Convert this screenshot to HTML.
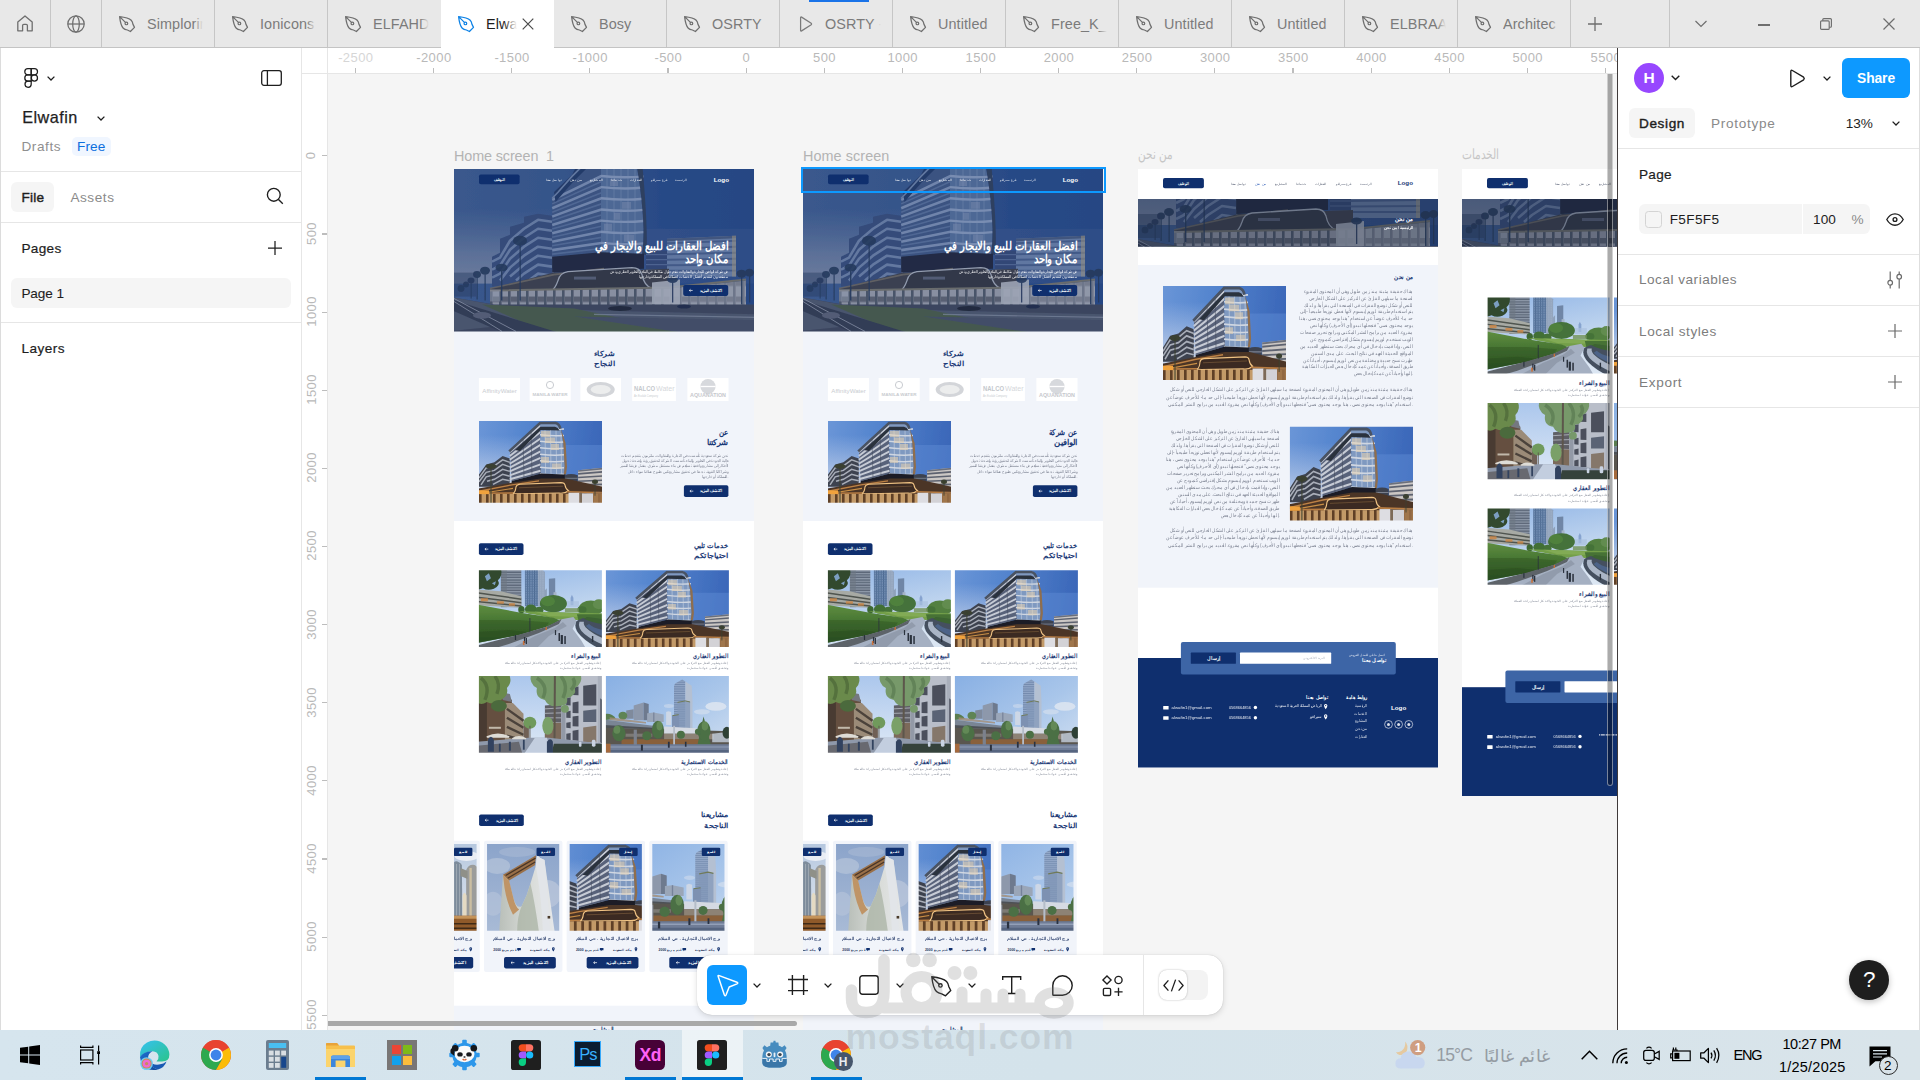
<!DOCTYPE html>
<html><head><meta charset="utf-8"><title>Elwafin - Figma</title><style>
html,body{margin:0;padding:0}
body{width:1920px;height:1080px;position:relative;overflow:hidden;background:#f5f5f5;font-family:"Liberation Sans",sans-serif}
.a{position:absolute;box-sizing:border-box}
.t{position:absolute;white-space:pre;line-height:1;font-family:"Liberation Sans",sans-serif}
svg{position:absolute;overflow:visible}
</style></head>
<body>
<svg width="0" height="0" style="position:absolute;left:-10px;top:-10px">
<defs>
<filter id="fb1" x="-5%" y="-5%" width="110%" height="110%"><feGaussianBlur stdDeviation="0.55"/></filter>
<filter id="fb2" x="-5%" y="-5%" width="110%" height="110%"><feGaussianBlur stdDeviation="0.4"/></filter>
<linearGradient id="gHeroSky" x1="0" y1="0" x2="1" y2="0"><stop offset="0" stop-color="#4a6ba3"/><stop offset="0.35" stop-color="#43659f"/><stop offset="0.7" stop-color="#30569a"/><stop offset="1" stop-color="#2d5296"/></linearGradient>
<linearGradient id="gHeroHaze" x1="0" y1="0" x2="0" y2="1"><stop offset="0" stop-color="#7d8fb4" stop-opacity="0"/><stop offset="0.6" stop-color="#8796b8" stop-opacity="0.75"/><stop offset="1" stop-color="#9aa3bd" stop-opacity="0.9"/></linearGradient>
<linearGradient id="gHeroGlass" x1="0" y1="0" x2="1" y2="0"><stop offset="0" stop-color="#6f86b3"/><stop offset="0.5" stop-color="#8197c0"/><stop offset="1" stop-color="#506a9e"/></linearGradient>
<pattern id="pBandH" width="4" height="5.2" patternUnits="userSpaceOnUse"><rect width="4" height="5.2" fill="#7d92bb"/><rect y="2.8" width="4" height="2.4" fill="#4a6192"/></pattern>
<pattern id="pBandH2" width="4" height="6.6" patternUnits="userSpaceOnUse"><rect width="4" height="6.6" fill="#7990bd"/><rect y="4.8" width="4" height="1.8" fill="#50689a"/></pattern>
<pattern id="pBandH3" width="4" height="4.4" patternUnits="userSpaceOnUse"><rect width="4" height="4.4" fill="#7085ad"/><rect y="2.2" width="4" height="2.2" fill="#3f5585"/></pattern>
<pattern id="pShop" width="9" height="16" patternUnits="userSpaceOnUse"><rect width="9" height="16" fill="#b4b6bf"/><rect x="0" width="2.6" height="16" fill="#5f6473"/><rect x="2.6" y="0" width="6.4" height="5.5" fill="#72747f"/></pattern>

<symbol id="hero" viewBox="0 0 300 163" preserveAspectRatio="none">
<g filter="url(#fb1)"><rect x="-6" y="-6" width="312" height="175" fill="url(#gHeroSky)"/>
<rect x="0" y="40" width="100" height="75" fill="url(#gHeroHaze)"/>
<rect x="190" y="60" width="110" height="55" fill="#46669f" opacity="0.5"/>
<!-- left wing -->
<path d="M38,118 V88 L46,84 V70 L56,66 V58 L70,54 V48 L84,45 L98.2,47 V118 Z" fill="#41588a"/>
<clipPath id="cpWing"><path d="M38,118 V88 L46,84 V70 L56,66 V58 L70,54 V48 L84,45 L98.2,47 V118 Z"/></clipPath><g clip-path="url(#cpWing)"><path d="M38,93 L46,89 L56,72 L70,60 L84,51 L98,53 M38,101 L46,97 L56,81 L70,69 L84,60 L98,62 M38,109 L46,105 L56,90 L70,78 L84,69 L98,71 M46,112 L56,99 L70,87 L84,78 L98,80 M56,108 L70,96 L84,87 L98,89 M62,112 L70,105 L84,96 L98,98 M76,111 L84,105 L98,107" stroke="#8196be" stroke-width="2.6" fill="none" stroke-linejoin="round"/></g>
<!-- main tower side face -->
<path d="M98.2,100 V28 L104,22 L118,6 L126,-2 H148 V96 Z" fill="#4a6293"/>
<path d="M98.2,31.0 L147.5,7.0 M98.2,39.4 L147.5,18.2 M98.2,47.8 L147.5,29.4 M98.2,56.2 L147.5,40.6 M98.2,64.6 L147.5,51.8 M98.2,73.0 L147.5,63.0 M98.2,81.4 L147.5,74.2" stroke="#92a7cc" stroke-width="2.6" fill="none"/>
<path d="M98.2,35.0 L147.5,12.6 M98.2,43.4 L147.5,23.8 M98.2,51.8 L147.5,35.0 M98.2,60.2 L147.5,46.2 M98.2,68.6 L147.5,57.4 M98.2,77.0 L147.5,68.6 M98.2,85.4 L147.5,79.8" stroke="#6f87b4" stroke-width="1.6" fill="none" opacity="0.8"/>
<path d="M100,23 L118,6 L122,-2 L134,-2 L119,13 L101.5,33 Z" fill="#2b4272"/>
<path d="M98.2,29.4 L104,23.4 L118,7.4 L126,-0.6" stroke="#8097bf" stroke-width="1.6" fill="none"/>
<!-- main tower glass -->
<path d="M147,-2 H183 Q188.5,30 189.6,60 Q189.6,76 188,86 L147,86 Z" fill="#647fae"/>
<path d="M153,0 V86 M160,0 V86 M167,0 V86 M174,0 V86 M181,0 V86" stroke="#9db1d4" stroke-width="0.9" opacity="0.55"/>
<path d="M156,10 h8 v7 h-8 Z M168,33 h9 v7 h-9 Z M150,55 h8 v7 h-8 Z M170,66 h10 v7 h-10 Z M160,44 h6 v7 h-6 Z" fill="#a9bad8" opacity="0.4"/>
<path d="M147,7.0 Q170,9.4 189.6,7.4 M147,18.2 Q170,20.6 189.6,18.6 M147,29.4 Q170,31.8 189.6,29.8 M147,40.6 Q170,43.0 189.6,41.0 M147,51.8 Q170,54.2 189.6,52.2 M147,63.0 Q170,65.4 189.6,63.4 M147,74.2 Q170,76.6 189.6,74.6 M147,85.4 Q170,87.8 189.6,85.8" stroke="#9fb3d6" stroke-width="2.4" fill="none"/>
<path d="M183,-2 Q188.5,30 189.6,60 Q189.6,76 188,86 L192.6,86 Q194,60 188.6,-2 Z" fill="#3a4868"/>
<!-- dark band under tower -->
<path d="M98.2,88 L147,83.6 L190,85 V100 L98.2,104 Z" fill="#262b3f"/>
<!-- right buildings -->
<rect x="192" y="82" width="22" height="24" fill="#3d5184"/>
<path d="M192,86 H214 M192,91 H214 M192,96 H214 M192,101 H214" stroke="#647aa8" stroke-width="1.2"/>
<path d="M213,70 L282,67 V108 H213 Z" fill="#7f95bf"/>
<path d="M213,74.5 L282,72 M213,80 L282,78 M213,85.5 L282,84 M213,91 L282,90 M213,96.5 L282,96 M213,102 L282,102" stroke="#566d9d" stroke-width="2"/>
<path d="M213,70 L282,67 V69.5 L213,72.5 Z" fill="#55698f"/>
<rect x="278" y="67" width="4" height="41" fill="#c4b48f" opacity="0.55"/>
<!-- podium -->
<path d="M36,120 L100,104 L215,100 V124 H36 Z" fill="#4b4b52"/>
<path d="M36,120 L100,106 L150,100" stroke="#8b7f70" stroke-width="1.6" fill="none" opacity="0.8"/>
<path d="M96,123 Q101,121 104,112 Q106,104 114,103 L178,99 Q186,99 188,106 Q190,117 198,120" stroke="#c3c7d2" stroke-width="1.3" fill="#3c3d46"/>
<rect x="120" y="108" width="22" height="3" fill="#8893ad" opacity="0.6"/>
<!-- shops -->
<path d="M36,122 L215,120 L292,112 V140 H36 Z" fill="url(#pShop)"/>
<path d="M215,120 L292,112 V140 H215 Z" fill="#c9ccd4" opacity="0.45"/>
<path d="M36,122 L215,119 L292,111" stroke="#8a8578" stroke-width="2" fill="none"/>
<rect x="36" y="121" width="10" height="12" fill="#b9bfd0" opacity="0.5"/>
<path d="M198,114 L226,111 V136 H198 Z" fill="#d0d3da" opacity="0.9"/>
<!-- ground -->
<path d="M-6,128 L40,136 L306,136 V169 H-6 Z" fill="#4b5064"/>
<path d="M-6,128 L60,140 L306,146 V152 L120,150 L-6,163 Z" fill="#646c82" opacity="0.7"/>
<path d="M28,136 L120,140 L260,169 H104 Z" fill="#586c4f"/>
<path d="M-6,130 L120,169 H60 L-6,140 Z" fill="#3e4458"/>
<path d="M0,133 L48,163 M0,130 L62,163" stroke="#aeb3c2" stroke-width="1" opacity="0.8"/>
<path d="M120,148 L306,152 V169 H260 Z" fill="#555c70"/>
<path d="M140,146 L306,149" stroke="#a3a9b9" stroke-width="1.2" opacity="0.7"/>

<!-- cars -->
<ellipse cx="166" cy="140" rx="12" ry="2.6" fill="#2a2d3a"/>
<ellipse cx="230" cy="138" rx="7" ry="2" fill="#27324f"/>
<ellipse cx="28" cy="147" rx="9" ry="3.4" fill="#6a7084"/>
<!-- palms -->
<g fill="#2c4163" opacity="0.9"><rect x="65.5" y="74" width="1.3" height="58"/><ellipse cx="66" cy="72" rx="7" ry="5"/><rect x="47" y="100" width="1.4" height="32"/><ellipse cx="47.5" cy="99" rx="6" ry="4"/>
<rect x="30.5" y="104" width="1.2" height="28"/><ellipse cx="31" cy="102" rx="5" ry="4"/><rect x="22.5" y="107" width="1.2" height="24"/><ellipse cx="23" cy="106" rx="4" ry="3.5"/>
<ellipse cx="17" cy="112" rx="3.5" ry="3"/><ellipse cx="12" cy="116" rx="3" ry="3"/><ellipse cx="7" cy="120" rx="3.5" ry="3.5"/><rect x="16.6" y="112" width="1" height="18"/>
<rect x="287" y="106" width="1.3" height="30"/><ellipse cx="287.5" cy="105" rx="5" ry="4"/><rect x="295" y="104" width="1.3" height="30"/><ellipse cx="295.5" cy="104" rx="4.5" ry="4"/>
<rect x="218" y="112" width="1.3" height="22"/><ellipse cx="218.5" cy="111" rx="5.5" ry="3.5"/></g>
<rect x="-4" y="104" width="26" height="24" fill="#33466b" opacity="0.5"/>
<rect x="-6" y="-6" width="312" height="175" fill="#142a52" opacity="0.27"/>
</g></symbol>

<!-- curved building day image 123x82 -->
<linearGradient id="gBSky" x1="0" y1="0" x2="1" y2="0.1"><stop offset="0" stop-color="#6c97d8"/><stop offset="0.45" stop-color="#5283cd"/><stop offset="1" stop-color="#3a66b8"/></linearGradient>
<linearGradient id="gBHaze" x1="0" y1="0" x2="0" y2="1"><stop offset="0" stop-color="#c9d6ec" stop-opacity="0"/><stop offset="1" stop-color="#d4dced" stop-opacity="0.95"/></linearGradient>
<pattern id="pB1" width="4" height="4.6" patternUnits="userSpaceOnUse"><rect width="4" height="4.6" fill="#c2c7d0"/><rect y="2" width="4" height="2.6" fill="#4c5263"/></pattern>
<pattern id="pB2" width="4" height="5.4" patternUnits="userSpaceOnUse"><rect width="4" height="5.4" fill="#8fb0dc"/><rect y="3.9" width="4" height="1.5" fill="#dfe5ee"/></pattern>
<pattern id="pB3" width="4" height="3.8" patternUnits="userSpaceOnUse"><rect width="4" height="3.8" fill="#b7bcc6"/><rect y="1.8" width="4" height="2" fill="#3f4556"/></pattern>
<pattern id="pB4" width="7" height="10" patternUnits="userSpaceOnUse"><rect width="7" height="10" fill="#c39a68"/><rect width="2.6" height="10" fill="#5f3f27"/></pattern>
<symbol id="bldg" viewBox="0 0 123 82" preserveAspectRatio="none">
<g filter="url(#fb2)"><rect x="-4" y="-4" width="131" height="90" fill="url(#gBSky)"/>
<rect x="-4" y="14" width="60" height="56" fill="url(#gBHaze)"/>
<rect x="84" y="24" width="43" height="30" fill="#5d8ad3" opacity="0.5"/>
<!-- left wing -->
<path d="M0,66 V53.6 L7.2,43.5 L15.4,41.4 L23.6,35.1 L30.8,37.7 V66 Z" fill="#3e434f"/>
<path d="M0,57 L7.2,47 L15.4,45 L23.6,39 L30.8,41.5 M0,61 L7.2,51.5 L15.4,49.5 L23.6,43.5 L30.8,46 M2,64 L7.2,56 L15.4,54 L23.6,48.5 L30.8,50.5 M8,60.5 L15.4,58.5 L23.6,53.5 L30.8,55.5 M14,63.5 L23.6,58.5 L30.8,60" stroke="#a9aeb9" stroke-width="1.5" fill="none"/>
<!-- tower side face -->
<path d="M30.8,28.9 L61.1,0.8 L62,52.7 L32.7,60.3 Z" fill="#59627a"/>
<path d="M30.8,31.1 L61.5,4.4 M30.8,35.0 L61.5,10.9 M30.8,38.9 L61.5,17.4 M30.8,42.8 L61.5,23.9 M30.8,46.7 L61.5,30.4 M30.8,50.6 L61.5,36.9 M30.8,54.5 L61.5,43.4 M30.8,58.4 L61.5,49.9 M30.8,62.3 L61.5,56.4" stroke="#c6cbd5" stroke-width="1.9" fill="none"/>
<path d="M44,17 L45,57 M52,9.5 L53,55" stroke="#3f4759" stroke-width="0.8" opacity="0.6"/>
<!-- tower glass -->
<path d="M61.1,0.8 L76.5,0.8 Q81,2 81.8,7.5 L84.2,20.9 L85.7,46 L84.7,53.6 L62,52.7 Z" fill="#7f99c0"/>
<path d="M66,8 L66.6,52.9 M71.5,8 L72,53 M77,8.5 L77.6,53.2 M82,12 L82.6,53.4" stroke="#d6deea" stroke-width="0.7" opacity="0.7"/>
<path d="M61,7.3 Q74,8.9 85,7.9 M61,13.8 Q74,15.4 85,14.4 M61,20.3 Q74,21.9 85,20.9 M61,26.8 Q74,28.4 85,27.4 M61,33.3 Q74,34.9 85,33.9 M61,39.8 Q74,41.4 85,40.4 M61,46.3 Q74,47.9 85,46.9 M61,52.8 Q74,54.4 85,53.4" stroke="#cfd6e1" stroke-width="1.5" fill="none"/>
<path d="M62,10 H71 V16 H62 Z M72,23 H80 V29 H72 Z M62,36 H70 V42 H62 Z M73,42.5 H82 V48 H73 Z M66,16.5 H76 V22 H66 Z" fill="#ead3b0" opacity="0.55"/>
<path d="M81.8,7.5 L84.2,20.9 L85.7,46 L84.7,53.6 L87,53.6 L88,46 L86.6,22 Z" fill="#8f6e4d"/>
<!-- roof slab -->
<path d="M30.2,30.4 L61.1,1.9 L76.5,1.9 Q80.4,2.8 81.4,7.7" stroke="#4a5263" stroke-width="2.6" fill="none"/>
<path d="M36,29 L61.5,5.6 L76,5.6 Q79,6.4 80.6,9.5 L61.8,9 L41,30 Z" fill="#2b303d"/>
<!-- dark underside -->
<path d="M32.7,60.3 L62,52.7 L84.7,53.6 L86.5,53.6 V58.5 L62,58.5 L32.7,66.5 Z" fill="#1b1e27"/>
<!-- right buildings -->
<path d="M85.7,54.4 Q92,52 98.7,54.4 V68 H85.7 Z" fill="#3d4350"/>
<path d="M86,57.5 H98.7 M86,61 H98.7 M86,64.5 H98.7" stroke="#7a808e" stroke-width="0.9"/>
<path d="M99.1,49.4 L123.5,46.9 V68 H99.1 Z" fill="#cbc7c4"/>
<path d="M99.1,53 L123.5,51 M99.1,56.7 L123.5,55.2 M99.1,60.4 L123.5,59.4 M99.1,64.1 L123.5,63.6" stroke="#5d626f" stroke-width="1.6"/>
<path d="M99.1,49.4 L123.5,46.9 V48.6 L99.1,51 Z" fill="#6b6f7c"/>
<!-- podium -->
<path d="M-2,68 L32.7,62 L62,57.6 L86.5,57.6 L123.5,66 V84 H-2 Z" fill="#4c3526"/>
<path d="M0,70.5 L33,64 L60,60" stroke="#c98a48" stroke-width="1.3" fill="none" opacity="0.9"/>
<path d="M0,73 L34,67.6" stroke="#e8a64e" stroke-width="1.1" fill="none" opacity="0.8"/>
<path d="M33.7,72.6 Q36.4,72 37,66.1 Q37.6,63.6 41,63.4 L82,61.8 Q85.6,61.8 86,64.4 Q86.6,68.4 89.6,70 Q86,73 80,72.4 L38,73 Z" fill="#3b2a20" stroke="#f0c384" stroke-width="1.1"/>
<path d="M40,67 L84,65.4" stroke="#7a5a3c" stroke-width="0.8" opacity="0.8"/>
<path d="M-2,73 H125 V84 H-2 Z" fill="url(#pB4)"/>
<path d="M-2,72.6 L34,72.2 M88,71 L125,72" stroke="#b87d43" stroke-width="1.5"/>
<rect x="0" y="69.6" width="10" height="3.8" fill="#f0a23c"/>
<rect x="89.5" y="72" width="11" height="10.5" fill="#dddde2"/><rect x="103" y="72.6" width="11" height="10" fill="#d3d2d6"/><rect x="100.5" y="72" width="2.5" height="11" fill="#7c6a58"/>
<rect x="114" y="71" width="10" height="12" fill="#9a7048" opacity="0.85"/>
<g fill="#3a4030"><path d="M6,46 Q12,40 18,46 Q14,44.6 12,48 Q10,44.6 6,46 Z"/><ellipse cx="12" cy="45.4" rx="5.4" ry="2.6"/><rect x="11.5" y="45" width="1" height="38"/><ellipse cx="116" cy="61" rx="3" ry="2.2"/><rect x="115.6" y="61" width="0.8" height="14"/></g>
</g></symbol>

<!-- park 123x77 -->
<linearGradient id="gPSky" x1="0" y1="0" x2="0.3" y2="1"><stop offset="0" stop-color="#8fb4e6"/><stop offset="0.6" stop-color="#bdd3ee"/><stop offset="1" stop-color="#dbe6f3"/></linearGradient>
<linearGradient id="gPHill" x1="0" y1="0" x2="0" y2="1"><stop offset="0" stop-color="#5f8e40"/><stop offset="0.5" stop-color="#447231"/><stop offset="1" stop-color="#2d5224"/></linearGradient>
<pattern id="pP1" width="3" height="2.6" patternUnits="userSpaceOnUse"><rect width="3" height="2.6" fill="#8e99a9"/><rect y="1.3" width="3" height="1.3" fill="#5b6677"/></pattern>
<pattern id="pP2" width="2.4" height="2.4" patternUnits="userSpaceOnUse"><rect width="2.4" height="2.4" fill="#7590b5"/><rect width="1" height="2.4" fill="#4e6a91"/><rect y="1.4" width="2.4" height="1" fill="#55739b" opacity="0.7"/></pattern>
<symbol id="park" viewBox="0 0 123 77" preserveAspectRatio="none">
<g filter="url(#fb2)"><rect x="-4" y="-4" width="131" height="85" fill="url(#gPSky)"/>
<!-- buildings -->
<path d="M22,-2 H42.4 V37 H22 Z" fill="url(#pP1)"/>
<path d="M22,-2 H28 V37 H22 Z" fill="#6d7782" opacity="0.6"/>
<path d="M46,-2 H62 L66,2 V36 H46 Z" fill="url(#pP2)"/>
<path d="M59,-2 H62 L66,2 V36 H59 Z" fill="#a9b7c9" opacity="0.75"/>
<path d="M66,20 L68,18 V36 H66 Z" fill="#8ea1ba"/>
<path d="M70,8.6 L76.3,7.9 V26 H70 Z" fill="#6f86a6"/><path d="M74.6,22 H77.6 V27 H74.6 Z" fill="#a5b4c8"/>
<path d="M91.7,35 V27.5 L93,24.6 L94.5,27.5 V35 Z" fill="#86a3cf"/><rect x="88" y="31" width="12" height="6" fill="#a9c0de" opacity="0.7"/>
<!-- dark tree top-left -->
<path d="M-2,-2 H22 Q24,6 19,10 Q22,15 15,18.5 Q9,21 4,18 L-2,20 Z" fill="#32492f"/>
<path d="M6,6 L10,3 L12,8 L8,11 Z M13,13 L17,11 L16,15 Z" fill="#8fb4e6" opacity="0.8"/>
<!-- terraces -->
<path d="M-2,19.3 L22,21 L42.4,26 V37.5 L-2,35 Z" fill="#a7aaa4"/>
<path d="M-2,22.5 L42.4,29 M-2,27 L42.4,32.6 M-2,31.4 L42.4,35.8" stroke="#50544f" stroke-width="1.5"/>
<path d="M2,28 H9 V31 H2 Z M18,31 H25 V33.6 H18 Z M30,33 H36 V35.6 H30 Z" fill="#c98646" opacity="0.85"/>
<!-- trees band -->
<ellipse cx="74.5" cy="33.5" rx="13.5" ry="8.6" fill="#44723a"/><ellipse cx="69" cy="31" rx="7" ry="5" fill="#52833f" opacity="0.9"/>
<ellipse cx="52" cy="39" rx="6" ry="4.6" fill="#426f36"/><ellipse cx="42.5" cy="39.5" rx="3.2" ry="3.6" fill="#3d6832"/><ellipse cx="60.5" cy="40" rx="4" ry="3.4" fill="#447238"/>
<ellipse cx="112" cy="38" rx="12" ry="7.6" fill="#52803f"/><ellipse cx="120" cy="34" rx="6" ry="5" fill="#628c4f"/><ellipse cx="103" cy="39.5" rx="4.6" ry="3.4" fill="#447238"/>
<rect x="86" y="38" width="14" height="4" fill="#729256" opacity="0.8"/>
<!-- lit lawn -->
<path d="M40,41 L123,43 V50 L82,50 Z" fill="#739f49"/>
<path d="M56,41.6 L100,43.4 V46.8 L70,46 Z" fill="#86ae57" opacity="0.8"/>
<path d="M98,44 H123 V52 H100 Z" fill="#467236"/>
<!-- hill -->
<path d="M-2,34.3 L43.2,42.9 L74.8,47.6 L82.6,50.8 L66.9,57 L40,65 L-2,73 Z" fill="url(#gPHill)"/>
<path d="M-2,50 L40,50 L70,52.5 L66.9,57 L40,65 L-2,73 Z" fill="#2f5524" opacity="0.45"/>
<path d="M-2,62 L30,60 L50,62 L40,65 L-2,73 Z" fill="#274a1f" opacity="0.45"/>
<!-- path -->
<path d="M82.6,49.2 L94.5,46.9 L97.6,50.8 L93.7,58.7 L102.4,70.5 L107.9,80 H-2 V77 L3.8,76.6 L40,65.7 L66.9,57.9 Z" fill="#a5b0c2"/>
<path d="M-2,80 V75.5 L40,64.6 L66.9,56.8 L82.6,49.2 L80,54 L60,63 L30,74 L10,80 Z" fill="#5d6369"/>
<path d="M30,80 L56,66 L76,58 L84,52 L88,56 L70,66 L56,80 Z" fill="#8c96a6" opacity="0.8"/>
<!-- curved wall right -->
<path d="M97.6,50.8 Q94,58 102,66 Q110,74 123.5,80 V52 L104,48 Z" fill="#44505f"/>
<path d="M100.5,51.6 Q98.4,58 105.6,64 Q113,70 123.5,74.6 V68 Q114,64 108.6,59 Q104,55 105,51.6 Z" fill="#aab5c6"/>
<path d="M107,56 Q112,62 123.5,66 V60 Q114,58 110,54 Z" fill="#4d6488"/>
<path d="M105,48.6 Q113,52.6 123.5,54 V49 L108,47 Z" fill="#3c6331"/>
<g fill="#2a303c"><rect x="79.6" y="63" width="1.5" height="8"/><rect x="81.8" y="65" width="2.2" height="9"/><rect x="85.4" y="66" width="1.5" height="8"/><rect x="76" y="60" width="1.2" height="5"/><rect x="45" y="67" width="1.3" height="6"/><rect x="46.8" y="68" width="1.3" height="6"/><rect x="36" y="65" width="1.2" height="5"/><rect x="113" y="66" width="1.4" height="6"/><rect x="50.6" y="48" width="0.8" height="14"/></g>
<g fill="#c9713a"><rect x="44" y="71" width="1.6" height="4"/><rect x="66.6" y="57" width="1.4" height="3"/></g>
</g></symbol>

<!-- street 123x77 -->
<linearGradient id="gSSky" x1="0" y1="0" x2="0" y2="1"><stop offset="0" stop-color="#a9c5ec"/><stop offset="1" stop-color="#e1ebf6"/></linearGradient>
<pattern id="pS1" width="10" height="10.5" patternUnits="userSpaceOnUse"><rect width="10" height="10.5" fill="#b4bac6"/><rect x="2.2" y="2.2" width="7.8" height="8.3" fill="#4f5562"/></pattern>
<symbol id="street" viewBox="0 0 123 77" preserveAspectRatio="none">
<g filter="url(#fb2)"><rect x="-4" y="-4" width="131" height="85" fill="url(#gSSky)"/>
<!-- left brick buildings -->
<path d="M-2,18 L26,19 L33,24 V72 H-2 Z" fill="#65503f"/>
<path d="M-2,24 L8,24 V72 H-2 Z" fill="#4a3b31"/>
<path d="M26,27 L34,27 L44.6,38 V66 H26 Z" fill="#9b8b78"/>
<path d="M28,33 L44.6,45 M28,42 L44.6,52 M28,51 L44.6,59 M28,60 L44.6,65" stroke="#4c433b" stroke-width="2.4"/>
<path d="M21,16 L31,18 L33,26 L24,24 Z" fill="#74787f"/>
<path d="M44.6,47 L50,50 V66 H44.6 Z" fill="#6f6055"/>
<rect x="10" y="51" width="12" height="2" fill="#d8d2c6" opacity="0.8"/>
<!-- mid-right building -->
<path d="M66,29.5 L82.6,28 V66 H66 Z" fill="#5f5f66"/>
<path d="M66,33 L82.6,32 M66,37.5 L82.6,37 M66,42 L82.6,42 M66,46.5 L82.6,47" stroke="#a7aab2" stroke-width="1"/>
<path d="M66,47 H82.6 V66 H66 Z" fill="#7c6a5a"/>
<!-- right grid building -->
<path d="M82.6,66.5 L82.6,35.0 L97.2,-1.2 L126,-2 V72 L82.6,68.9 Z" fill="#b9bec9"/>
<path d="M82.6,35.0 L97.2,-1.2 L100.8,-1.2 L86.6,35.0 L86.6,66.5 L82.6,66.5 Z" fill="#9299a6"/>
<path d="M87.4,22.6 L91.7,21.7 L91.7,29.5 L87.4,29.2 Z" fill="#4b505c"/><path d="M87.4,36.0 L91.7,35.0 L91.7,42.1 L87.4,41.8 Z" fill="#4b505c"/><path d="M87.4,47.0 L91.7,46.1 L91.7,52.4 L87.4,52.0 Z" fill="#4b505c"/><path d="M87.4,58.0 L91.7,57.1 L91.7,64.2 L87.4,63.9 Z" fill="#4b505c"/><path d="M93.7,11.6 L99.6,10.6 L99.6,19.3 L93.7,19.0 Z" fill="#4b505c"/><path d="M93.7,26.5 L99.6,25.6 L99.6,37.4 L93.7,37.1 Z" fill="#4b505c"/><path d="M93.7,40.7 L99.6,39.8 L99.6,50.8 L93.7,50.5 Z" fill="#4b505c"/><path d="M93.7,54.9 L99.6,53.9 L99.6,65.0 L93.7,64.6 Z" fill="#4b505c"/><path d="M104.3,9.8 L117.4,8.3 L117.4,29.5 L104.3,29.5 Z" fill="#4b505c"/><path d="M104.3,35.0 L117.4,33.5 L117.4,46.1 L104.3,46.1 Z" fill="#5a6474"/><path d="M104.3,51.6 L117.4,50.0 L117.4,66.5 L104.3,66.5 Z" fill="#85776a"/>
<path d="M118.9,-1.2 L126,-2 V72 L118.9,68.9 Z" fill="#a9afbb"/>
<path d="M121.3,22.4 L126,26 V70 L121.3,66.5 Z" fill="#555b68"/>
<!-- trees -->
<path d="M-2,-2 H30 Q34,6 28,12 Q30,20 22,24 Q16,30 8,26 Q2,30 -2,26 Z" fill="#6b8a4c"/>
<path d="M2,2 Q12,10 6,24 M16,0 Q22,8 18,18" stroke="#425c33" stroke-width="3.4" fill="none" opacity="0.55"/>
<ellipse cx="20" cy="30" rx="8" ry="6" fill="#4c6a3c"/>
<path d="M52,-2 H102 Q104,8 96,12 Q98,20 88,22 Q90,30 80,30 Q70,32 66,24 Q56,22 58,12 Q50,8 52,-2 Z" fill="#77996a"/>
<path d="M58,2 Q70,10 64,22 M82,0 Q90,10 84,22 M94,2 Q98,8 92,14" stroke="#4d6e46" stroke-width="3.4" fill="none" opacity="0.5"/>
<path d="M75,-2 L77,-2 L76.6,66 H74.6 Z" fill="#5d564c"/>
<ellipse cx="51" cy="47" rx="6.4" ry="6" fill="#6f9a5c"/><rect x="50.6" y="50" width="0.9" height="14" fill="#5d564c"/>
<ellipse cx="69" cy="50" rx="5.6" ry="9" fill="#7aa067"/>
<ellipse cx="86" cy="33" rx="4" ry="4" fill="#77996a"/>
<!-- ground -->
<path d="M-2,66 L50,62 L70,62 L126,68 V80 H-2 Z" fill="#8f99ab"/>
<path d="M44,80 L56,62 H68 L74,80 Z" fill="#c3cedf"/>
<path d="M-2,70 L40,66 L44,80 H-2 Z" fill="#5d5c60" opacity="0.8"/>
<path d="M75,68 H124 V80 H72 Z" fill="#36423a"/>
<path d="M7.6,60.6 Q19,55 30.6,60.6 L30,62 H8 Z M33,62.4 Q40,58 47.4,62.4 L47,63.4 H33.6 Z" fill="#dedcd6"/>
<g fill="#33435f"><path d="M9,64 Q12,58 15,64 V76 H9 Z"/><path d="M68,66 Q71.6,61 74,66 V80 H68 Z"/><rect x="44" y="64" width="1.8" height="10"/><rect x="30" y="66" width="2" height="9"/><rect x="20" y="68" width="1.8" height="8"/></g>
<g fill="#c9d3e2"><rect x="113" y="64" width="3.6" height="7" rx="1.4"/><rect x="100" y="66" width="2.6" height="5" rx="1"/></g>
</g></symbol>

<!-- tower 123x77 -->
<linearGradient id="gTSky" x1="0" y1="0" x2="1" y2="1"><stop offset="0" stop-color="#86aee3"/><stop offset="0.55" stop-color="#a9c6ea"/><stop offset="1" stop-color="#d5e2f2"/></linearGradient>
<pattern id="pT1" width="3" height="1.8" patternUnits="userSpaceOnUse"><rect width="3" height="1.8" fill="#93a8c8"/><rect y="1" width="3" height="0.8" fill="#6f86aa"/></pattern>
<symbol id="tower" viewBox="0 0 123 77" preserveAspectRatio="none">
<g filter="url(#fb2)"><rect x="-4" y="-4" width="131" height="85" fill="url(#gTSky)"/>
<ellipse cx="110" cy="30.5" rx="10.5" ry="4.4" fill="#dbe4f1" opacity="0.9"/><ellipse cx="96" cy="36" rx="8" ry="2.6" fill="#d3deee" opacity="0.7"/><ellipse cx="63" cy="30" rx="5" ry="2" fill="#cfdbec" opacity="0.6"/>
<!-- tower -->
<path d="M68.1,53.9 L68.1,9.8 L69.2,7.5 L76.3,3.5 L79.5,5.5 L79.5,53.9 Z" fill="url(#pT1)"/>
<path d="M79.5,5.5 L85.8,9.8 L86.6,25.6 L86.6,53.9 L79.5,53.9 Z" fill="#b4c0d2"/>
<path d="M71.6,26.4 L79.5,24.8 L84.2,26.0 L84.2,53.9 L71.6,53.9 Z" fill="#8398b8" opacity="0.75"/>
<path d="M71.6,26.5 L79.5,25.0 L84.2,26.1" stroke="#6f7a58" stroke-width="1" fill="none"/>
<path d="M66.1,39.8 L73.2,38.6 L73.2,53.9 L66.1,53.9 Z" fill="#7d91b2"/>
<path d="M66.5,39.8 L72.8,38.8" stroke="#6f7a58" stroke-width="1" fill="none"/>
<!-- thin white tower -->
<path d="M60.2,49.2 L60.2,36.2 L62.5,35.4 L65.3,36.2 L65.3,49.2 Z" fill="#cdd7e6"/>
<!-- midrise -->
<path d="M20.3,42.9 L20.3,34.6 L27.8,33.3 L27.8,42.9 Z" fill="#7f8a9c"/>
<path d="M27.8,44.5 L27.8,29.5 L37.7,26.5 L37.7,44.5 Z" fill="#8d98ab"/>
<path d="M37.7,26.5 L42.8,28.0 L42.8,44.5 L37.7,44.5 Z" fill="#6e7a8e"/>
<path d="M41.2,46.1 L41.2,37.4 L47.9,36.6 L57.8,38.6 L57.8,46.1 Z" fill="#9aa6b8"/>
<path d="M47.9,36.6 L47.9,46.1" stroke="#76829a" stroke-width="1.2"/>
<!-- left greenery + canopy -->
<path d="M-2,38.2 Q6,36.6 10,42.9 L-2,44.5 Z" fill="#5a7d50"/>
<ellipse cx="17" cy="39.8" rx="4.4" ry="4" fill="#5f8455"/>
<path d="M3.8,41.3 L40.1,46.1 L40.1,47.6 L3.8,44.5 Z" fill="#a38c74" opacity="0.8"/>
<path d="M-2,43.7 L47.2,50.0 L47.2,53.1 L-2,50.8 Z" fill="#7a8594"/>
<path d="M-2,49.2 L47.2,52.0 L47.2,53.5 L-2,52.4 Z" fill="#4d5157"/>
<!-- under-canopy zone -->
<path d="M-2,52.0 L47.2,53.1 L126,55.5 V80 H-2 Z" fill="#5a564f"/>
<path d="M58.2,50.8 L90.5,52.4 L90.5,57.9 L58.2,57.9 Z" fill="#d5dae3"/>
<path d="M58.2,57.9 H107.9 V63.4 H58.2 Z" fill="#8d8275"/>
<path d="M15.6,63.4 H94.5 V68.5 H15.6 Z" fill="#a8672f" opacity="0.6"/>
<path d="M19.6,57.9 H46.4 V61.0 H19.6 Z" fill="#8c8a84" opacity="0.7"/>
<rect x="27.8" y="53.9" width="3.2" height="17" fill="#7b818c"/>
<rect x="67.3" y="50.0" width="1.8" height="20" fill="#b5bdc9"/>
<rect x="97.2" y="42.9" width="1.2" height="32" fill="#9aa3b0"/>
<path d="M106.3,57.9 L126,55.5 V66.5 L106.3,66.5 Z" fill="#c6cfdd" opacity="0.8"/>
<!-- trees -->
<g fill="#4b6f45"><ellipse cx="13" cy="57.5" rx="6.6" ry="8"/><ellipse cx="52" cy="54" rx="6" ry="9"/><ellipse cx="41" cy="60" rx="4.6" ry="4.6"/><ellipse cx="75" cy="59" rx="4" ry="4"/>
<path d="M90.5,74.4 L97.6,40.6 L106.3,74.4 Z"/><ellipse cx="98" cy="55" rx="6.6" ry="9.6"/><ellipse cx="92" cy="56" rx="3" ry="3"/></g>
<ellipse cx="121" cy="57" rx="4.4" ry="6" fill="#2f3f36"/>
<g fill="#6d9560" opacity="0.7"><ellipse cx="11" cy="54" rx="3.4" ry="4"/><ellipse cx="53.6" cy="50" rx="3" ry="4.6"/><ellipse cx="99" cy="50" rx="3.2" ry="4.6"/></g>
<!-- ground -->
<path d="M-2,68.5 H126 V80 H-2 Z" fill="#6f7d97"/>
<path d="M-2,71.3 H126" stroke="#93a0b8" stroke-width="1.2"/>
<path d="M-2,74.4 H126 V80 H-2 Z" fill="#566580"/>
<rect x="0" y="68" width="4.6" height="9" fill="#a56a3c"/>
<g fill="#2b3140"><rect x="35" y="69" width="2" height="6"/><rect x="62" y="66" width="1.8" height="6"/><rect x="79" y="66" width="1.6" height="5"/></g>
</g></symbol>

<!-- arch 72x87 -->
<linearGradient id="gASky" x1="0" y1="0" x2="0" y2="1"><stop offset="0" stop-color="#8aa3ca"/><stop offset="1" stop-color="#a9bbd6"/></linearGradient>
<linearGradient id="gATower" x1="0" y1="0" x2="1" y2="0"><stop offset="0" stop-color="#b9bfb9"/><stop offset="0.5" stop-color="#d7dad6"/><stop offset="1" stop-color="#e6e8ea"/></linearGradient>
<symbol id="arch" viewBox="0 0 72 87" preserveAspectRatio="none">
<g filter="url(#fb2)"><rect x="-4" y="-4" width="80" height="95" fill="url(#gASky)"/>
<ellipse cx="10" cy="22" rx="13" ry="8" fill="#b7c4da" opacity="0.7"/><ellipse cx="60" cy="50" rx="14" ry="14" fill="#bcc8db" opacity="0.7"/><ellipse cx="30" cy="8" rx="18" ry="5" fill="#a9b9d4" opacity="0.6"/><ellipse cx="6" cy="60" rx="10" ry="12" fill="#b7c4da" opacity="0.6"/>
<path d="M12,90 L15.9,30.9 L21.6,36.1 L25.9,52.7 Q29,66 34.6,62.2 Q40,52 43.3,39.6 L48.6,22.2 L49.9,11.3 L53,14 L57.3,16.1 Q62,50 67.7,90 Z" fill="url(#gATower)"/>
<path d="M34.6,62.2 Q40,52 43.3,39.6 Q48,60 52,90 H30 Q30,72 34.6,62.2 Z" fill="#a9b3a4" opacity="0.75"/>
<path d="M48.6,22.2 L49.9,11.3 L53,14 L57.3,16.1 Q60,40 63,90 H56 Q54,50 48.6,22.2 Z" fill="#e2e5e9"/>
<path d="M15.9,30.9 L49,11.3 L47.7,21.3 L22,36.6 Z" fill="#9a7048"/>
<path d="M18.6,31.6 L48.4,14.2 M20.6,34.4 L48,18" stroke="#4a3628" stroke-width="1.3" fill="none"/>
<path d="M15.9,30.9 L22,36.6 L25.9,52.7 Q28.4,64 32,65.7 L25.9,70.9 Q20,60 17.4,44 Z" fill="#bf9466"/>
<rect x="60.4" y="72.2" width="2.6" height="2.6" fill="#4a3a2c"/>
</g></symbol>

<!-- gold towers 72x87 -->
<linearGradient id="gGSky" x1="0" y1="0" x2="0" y2="1"><stop offset="0" stop-color="#b4c6de"/><stop offset="1" stop-color="#e4e9f0"/></linearGradient>
<linearGradient id="gGold" x1="0" y1="0" x2="1" y2="0"><stop offset="0" stop-color="#8a7a5c"/><stop offset="0.4" stop-color="#e6d3a4"/><stop offset="0.7" stop-color="#b89a62"/><stop offset="1" stop-color="#7d8894"/></linearGradient>
<symbol id="gold" viewBox="0 0 72 87" preserveAspectRatio="none">
<g filter="url(#fb2)"><rect x="-4" y="-4" width="80" height="95" fill="url(#gGSky)"/>
<ellipse cx="62" cy="12" rx="12" ry="5" fill="#eef1f6" opacity="0.9"/>
<path d="M30,90 V30 Q36,18 44,24 V90 Z" fill="#8f9aa6"/>
<path d="M49.6,90 V18 Q53,16 57.3,21 L58,90 Z" fill="#7d8b9a"/>
<path d="M52,20 V74 M55,20 V74" stroke="#b9c0c6" stroke-width="0.8" opacity="0.7"/>
<path d="M61.6,90 V26 Q64,20 70,21 L74,24 V90 Z" fill="#9b9c9b"/>
<path d="M66,24 V74" stroke="#d7c7a4" stroke-width="2.4" opacity="0.8"/>
<path d="M56,24 L63,27 V35 L56,32 Z" fill="#8f9088"/>
<path d="M58,52 Q60,46 62,52 V76 H58 Z" fill="#e4dac3"/>
<path d="M44,72 H74 V90 H44 Z" fill="#8f5a2a"/>
<path d="M44,72 H74 V75 H44 Z" fill="#c4935a"/>
<path d="M44,80 H74 M44,84.5 H74" stroke="#3f2a18" stroke-width="1.6"/>
</g></symbol>
</defs>
</svg>

<div class="a" style="left:454px;top:169px;width:300px;height:880px;overflow:hidden;background:#f1f4fa"><svg width="300" height="880" viewBox="0 0 300 880" style="left:0;top:0;overflow:hidden;font-family:'Liberation Sans',sans-serif"><rect x="0.00" y="0.00" width="300.00" height="880.00" fill="#f1f4fa"/><use href="#hero" x="0.00" y="0.00" width="300.00" height="162.40"/><rect x="25.00" y="5.40" width="40.60" height="9.90" fill="#0f2f6e" rx="1.8"/><text x="40.00" y="11.70" font-size="3.6" fill="#fff" textLength="10.50" lengthAdjust="spacingAndGlyphs" font-weight="bold">التوظيف</text><text x="92.00" y="11.70" font-size="3.3" fill="#fff" textLength="16.00" lengthAdjust="spacingAndGlyphs" opacity="0.92">تواصل معنا</text><text x="116.00" y="11.70" font-size="3.3" fill="#fff" textLength="12.00" lengthAdjust="spacingAndGlyphs" opacity="0.92">من نحن</text><text x="136.00" y="11.70" font-size="3.3" fill="#fff" textLength="13.00" lengthAdjust="spacingAndGlyphs" opacity="0.92">المشاريع</text><text x="157.00" y="11.70" font-size="3.3" fill="#fff" textLength="11.00" lengthAdjust="spacingAndGlyphs" opacity="0.92">خدماتنا</text><text x="176.00" y="11.70" font-size="3.3" fill="#fff" textLength="12.00" lengthAdjust="spacingAndGlyphs" opacity="0.92">العقارات</text><text x="197.00" y="11.70" font-size="3.3" fill="#fff" textLength="16.00" lengthAdjust="spacingAndGlyphs" opacity="0.92">فرع سيرافو</text><text x="221.00" y="11.70" font-size="3.3" fill="#fff" textLength="12.00" lengthAdjust="spacingAndGlyphs" opacity="0.92">الرئيسية</text><text x="259.70" y="12.60" font-size="6.2" fill="#fff" textLength="15.30" lengthAdjust="spacingAndGlyphs" font-weight="bold">Logo</text><text x="140.60" y="80.90" font-size="12.2" fill="#fff" textLength="133.60" lengthAdjust="spacingAndGlyphs" font-weight="bold">افضل العقارات للبيع  والايجار في</text><text x="231.00" y="94.40" font-size="12.2" fill="#fff" textLength="43.20" lengthAdjust="spacingAndGlyphs" font-weight="bold">مكان واحد</text><text x="155.50" y="103.75" font-size="3.5" fill="#ffffff" textLength="118.70" lengthAdjust="spacingAndGlyphs" opacity="0.92">في شركة الوافين للتجارة والمقاولات نقدم حلول متكاملة في البناء والتطوير العقاري ونحن</text><text x="185.00" y="108.75" font-size="3.5" fill="#ffffff" textLength="89.20" lengthAdjust="spacingAndGlyphs" opacity="0.92">مستعدون لتقديم أفضل الخدمات لعملائنا في المملكة وخارجها</text><rect x="229.20" y="116.00" width="45.00" height="10.90" fill="#0f2f6e" rx="1.8"/><path d="M238.67,121.45 H235.27 M236.57,120.25 L235.27,121.45 L236.57,122.65" stroke="#fff" stroke-width="0.7" fill="none"/><text x="245.85" y="122.75" font-size="3.9" fill="#fff" textLength="22.05" lengthAdjust="spacingAndGlyphs" font-weight="bold">اكتشف المزيد</text><text x="140.00" y="186.60" font-size="7.4" fill="#1b3976" textLength="20.80" lengthAdjust="spacingAndGlyphs" font-weight="bold">شركاء</text><text x="139.60" y="197.00" font-size="7.4" fill="#1b3976" textLength="21.40" lengthAdjust="spacingAndGlyphs" font-weight="bold">النجاح</text><rect x="24.90" y="209.00" width="41.10" height="23.00" fill="#ffffff"/><rect x="75.60" y="209.00" width="41.10" height="23.00" fill="#ffffff"/><rect x="126.40" y="209.00" width="40.60" height="23.00" fill="#ffffff"/><rect x="178.20" y="209.00" width="43.70" height="23.00" fill="#ffffff"/><rect x="233.40" y="209.00" width="41.10" height="23.00" fill="#ffffff"/><text x="28.30" y="223.60" font-size="5.6" fill="#c9ccd1" textLength="34.50" lengthAdjust="spacingAndGlyphs">AffinityWater</text><circle cx="96" cy="216" r="3.6" fill="none" stroke="#c9ccd1" stroke-width="1"/><text x="78.50" y="226.60" font-size="4.2" fill="#c9ccd1" textLength="35.00" lengthAdjust="spacingAndGlyphs" font-weight="bold">MANILA WATER</text><ellipse cx="146.7" cy="220.5" rx="14" ry="7.6" fill="#d3d5d9"/><ellipse cx="146.7" cy="220.5" rx="10" ry="4.6" fill="#eceded"/><text x="180.00" y="222.00" font-size="7.2" fill="#c4c7cc" textLength="21.00" lengthAdjust="spacingAndGlyphs" font-weight="bold">NALCO</text><text x="202.00" y="222.00" font-size="7.2" fill="#d5d7db" textLength="18.50" lengthAdjust="spacingAndGlyphs">Water</text><text x="180.00" y="227.60" font-size="2.9" fill="#c9ccd1" textLength="24.00" lengthAdjust="spacingAndGlyphs">An Ecolab Company</text><circle cx="254" cy="217.5" r="7.6" fill="#d7d9dd"/><path d="M246.4,217.5 H261.6" stroke="#fff" stroke-width="1.3"/><text x="236.00" y="227.60" font-size="5.6" fill="#c6c8cd" textLength="36.00" lengthAdjust="spacingAndGlyphs" font-weight="bold">AQUANATION</text><use href="#bldg" x="25.00" y="252.10" width="123.00" height="81.60"/><text x="264.80" y="266.00" font-size="8.4" fill="#1b3976" textLength="9.70" lengthAdjust="spacingAndGlyphs" font-weight="bold">عن</text><text x="252.70" y="276.00" font-size="8.4" fill="#1b3976" textLength="21.80" lengthAdjust="spacingAndGlyphs" font-weight="bold">شركتنا</text><text x="166.90" y="287.75" font-size="3.5" fill="#6d7484" textLength="107.50" lengthAdjust="spacingAndGlyphs" opacity="0.9">نحن شركة سعودية تأسست في التجارة والمقاولات، ملتزمون بتقديم خدمات</text><text x="167.60" y="292.75" font-size="3.5" fill="#6d7484" textLength="106.80" lengthAdjust="spacingAndGlyphs" opacity="0.9">عالية الجودة في التطوير والبناء. تأسست الشركة لتحقيق رؤية واضحة: تحويل</text><text x="166.20" y="298.45" font-size="3.5" fill="#6d7484" textLength="108.20" lengthAdjust="spacingAndGlyphs" opacity="0.9">الأفكار إلى مشاريع واقعية تساهم في بناء مستقبل مشرق. بفضل فريقنا المميز</text><text x="173.70" y="303.55" font-size="3.5" fill="#6d7484" textLength="100.70" lengthAdjust="spacingAndGlyphs" opacity="0.9">وشراكاتنا القوية، نجحنا في تحقيق مشاريع تلبي طموح عملائنا سواء داخل</text><text x="248.20" y="309.45" font-size="3.5" fill="#6d7484" textLength="26.20" lengthAdjust="spacingAndGlyphs" opacity="0.9">المملكة أو خارجها.</text><rect x="229.90" y="316.30" width="44.50" height="11.70" fill="#0f2f6e" rx="1.8"/><path d="M239.31,322.15 H235.91 M237.21,320.95 L235.91,322.15 L237.21,323.35" stroke="#fff" stroke-width="0.7" fill="none"/><text x="246.37" y="323.45" font-size="3.9" fill="#fff" textLength="21.80" lengthAdjust="spacingAndGlyphs" font-weight="bold">اكتشف المزيد</text><rect x="0.00" y="352.00" width="300.00" height="484.70" fill="#ffffff"/><rect x="24.90" y="374.30" width="44.60" height="11.70" fill="#0f2f6e" rx="1.8"/><path d="M34.32,380.15 H30.92 M32.22,378.95 L30.92,380.15 L32.22,381.35" stroke="#fff" stroke-width="0.7" fill="none"/><text x="41.40" y="381.45" font-size="3.9" fill="#fff" textLength="21.85" lengthAdjust="spacingAndGlyphs" font-weight="bold">اكتشف المزيد</text><text x="239.50" y="379.40" font-size="7.4" fill="#1b3976" textLength="34.70" lengthAdjust="spacingAndGlyphs" font-weight="bold">خدمات تلبي</text><text x="239.80" y="389.40" font-size="7.4" fill="#1b3976" textLength="34.40" lengthAdjust="spacingAndGlyphs" font-weight="bold">احتياجاتكم</text><use href="#park" x="24.90" y="401.30" width="123.00" height="76.70"/><text x="117.00" y="488.80" font-size="6.2" fill="#1b3976" textLength="30.30" lengthAdjust="spacingAndGlyphs" font-weight="bold">البيع والشراء</text><text x="51.30" y="494.97" font-size="2.9" fill="#6d7484" textLength="96.00" lengthAdjust="spacingAndGlyphs" opacity="0.85">إعادة وتطوير العقار مع التركيز على الجودة والابتكار لضمان راحة العملاء</text><text x="105.80" y="500.47" font-size="2.9" fill="#6d7484" textLength="41.50" lengthAdjust="spacingAndGlyphs" opacity="0.85">وتحقيق أقصى عوائد استثمارية.</text><use href="#bldg" x="151.90" y="401.30" width="123.00" height="76.70"/><text x="239.00" y="488.80" font-size="6.2" fill="#1b3976" textLength="35.30" lengthAdjust="spacingAndGlyphs" font-weight="bold">التطوير العقاري</text><text x="178.30" y="494.97" font-size="2.9" fill="#6d7484" textLength="96.00" lengthAdjust="spacingAndGlyphs" opacity="0.85">إعادة وتطوير العقار مع التركيز على الجودة والابتكار لضمان راحة العملاء</text><text x="232.80" y="500.47" font-size="2.9" fill="#6d7484" textLength="41.50" lengthAdjust="spacingAndGlyphs" opacity="0.85">وتحقيق أقصى عوائد استثمارية.</text><use href="#street" x="24.90" y="507.00" width="123.00" height="76.70"/><text x="111.10" y="594.50" font-size="6.2" fill="#1b3976" textLength="36.20" lengthAdjust="spacingAndGlyphs" font-weight="bold">التطوير العقاري</text><text x="51.30" y="600.67" font-size="2.9" fill="#6d7484" textLength="96.00" lengthAdjust="spacingAndGlyphs" opacity="0.85">إعادة وتطوير العقار مع التركيز على الجودة والابتكار لضمان راحة العملاء</text><text x="105.80" y="606.17" font-size="2.9" fill="#6d7484" textLength="41.50" lengthAdjust="spacingAndGlyphs" opacity="0.85">وتحقيق أقصى عوائد استثمارية.</text><use href="#tower" x="151.90" y="507.00" width="123.00" height="76.70"/><text x="226.90" y="594.50" font-size="6.2" fill="#1b3976" textLength="47.40" lengthAdjust="spacingAndGlyphs" font-weight="bold">الخدمات الاستثمارية</text><text x="178.30" y="600.67" font-size="2.9" fill="#6d7484" textLength="96.00" lengthAdjust="spacingAndGlyphs" opacity="0.85">إعادة وتطوير العقار مع التركيز على الجودة والابتكار لضمان راحة العملاء</text><text x="232.80" y="606.17" font-size="2.9" fill="#6d7484" textLength="41.50" lengthAdjust="spacingAndGlyphs" opacity="0.85">وتحقيق أقصى عوائد استثمارية.</text><text x="247.00" y="648.00" font-size="7.4" fill="#1b3976" textLength="27.20" lengthAdjust="spacingAndGlyphs" font-weight="bold">مشاريعنا</text><text x="250.00" y="659.00" font-size="7.4" fill="#1b3976" textLength="24.20" lengthAdjust="spacingAndGlyphs" font-weight="bold">الناجحة</text><rect x="25.10" y="645.40" width="44.70" height="11.60" fill="#0f2f6e" rx="1.8"/><path d="M34.53,651.20 H31.13 M32.43,650.00 L31.13,651.20 L32.43,652.40" stroke="#fff" stroke-width="0.7" fill="none"/><text x="41.64" y="652.50" font-size="3.9" fill="#fff" textLength="21.90" lengthAdjust="spacingAndGlyphs" font-weight="bold">اكتشف المزيد</text><rect x="-52.60" y="671.70" width="78.40" height="131.30" fill="#f1f4fa" rx="2"/><use href="#gold" x="-49.60" y="675.00" width="72.20" height="86.70"/><rect x="-0.10" y="678.80" width="18.50" height="8.20" fill="#0f2f6e" rx="1.2"/><text x="4.80" y="684.30" font-size="3.4" fill="#fff" textLength="8.60" lengthAdjust="spacingAndGlyphs" font-weight="bold">للبيع</text><text x="-43.70" y="771.30" font-size="4.4" fill="#2f4370" textLength="62.40" lengthAdjust="spacingAndGlyphs" font-weight="bold" opacity="0.9">برج الاعمال التجارية . حي السلام</text><path d="M15.35,779.70 a1.35,1.35 0 1 1 2.70,0 q0,1.22 -1.35,2.84 q-1.35,-1.62 -1.35,-2.84 Z" fill="#0f2f6e"/><circle cx="16.70" cy="779.70" r="0.51" fill="#fff" opacity="0.8"/><text x="-6.70" y="781.56" font-size="3.2" fill="#27365c" textLength="19.70" lengthAdjust="spacingAndGlyphs" font-weight="bold">مكة، السعودية</text><path d="M-19.40,778.9 h3.6 v2.4 h-1.5 l-1.1,1 v-1 h-1 Z" fill="#0f2f6e"/><text x="-43.30" y="781.56" font-size="3.2" fill="#27365c" textLength="22.40" lengthAdjust="spacingAndGlyphs" font-weight="bold">2000 قدم مربع</text><rect x="-32.60" y="787.90" width="51.80" height="11.50" fill="#0f2f6e" rx="1.8"/><path d="M-22.21,793.65 H-25.61 M-24.31,792.45 L-25.61,793.65 L-24.31,794.85" stroke="#fff" stroke-width="0.7" fill="none"/><text x="-13.43" y="794.95" font-size="3.9" fill="#fff" textLength="25.38" lengthAdjust="spacingAndGlyphs" font-weight="bold">اكتشف المزيد</text><rect x="30.03" y="671.70" width="78.40" height="131.30" fill="#f1f4fa" rx="2"/><use href="#arch" x="33.03" y="675.00" width="72.20" height="86.70"/><rect x="82.53" y="678.80" width="18.50" height="8.20" fill="#0f2f6e" rx="1.2"/><text x="87.43" y="684.30" font-size="3.4" fill="#fff" textLength="8.60" lengthAdjust="spacingAndGlyphs" font-weight="bold">للبيع</text><text x="38.93" y="771.30" font-size="4.4" fill="#2f4370" textLength="62.40" lengthAdjust="spacingAndGlyphs" font-weight="bold" opacity="0.9">برج الاعمال التجارية . حي السلام</text><path d="M97.98,779.70 a1.35,1.35 0 1 1 2.70,0 q0,1.22 -1.35,2.84 q-1.35,-1.62 -1.35,-2.84 Z" fill="#0f2f6e"/><circle cx="99.33" cy="779.70" r="0.51" fill="#fff" opacity="0.8"/><text x="75.93" y="781.56" font-size="3.2" fill="#27365c" textLength="19.70" lengthAdjust="spacingAndGlyphs" font-weight="bold">مكة، السعودية</text><path d="M63.23,778.9 h3.6 v2.4 h-1.5 l-1.1,1 v-1 h-1 Z" fill="#0f2f6e"/><text x="39.33" y="781.56" font-size="3.2" fill="#27365c" textLength="22.40" lengthAdjust="spacingAndGlyphs" font-weight="bold">2000 قدم مربع</text><rect x="50.03" y="787.90" width="51.80" height="11.50" fill="#0f2f6e" rx="1.8"/><path d="M60.42,793.65 H57.02 M58.32,792.45 L57.02,793.65 L58.32,794.85" stroke="#fff" stroke-width="0.7" fill="none"/><text x="69.20" y="794.95" font-size="3.9" fill="#fff" textLength="25.38" lengthAdjust="spacingAndGlyphs" font-weight="bold">اكتشف المزيد</text><rect x="112.66" y="671.70" width="78.40" height="131.30" fill="#f1f4fa" rx="2"/><svg x="115.66" y="675" width="72.2" height="86.7" viewBox="24 0 68.3 82" preserveAspectRatio="none" style="overflow:hidden"><use href="#bldg" x="0" y="0" width="123" height="82"/></svg><rect x="165.16" y="678.80" width="18.50" height="8.20" fill="#0f2f6e" rx="1.2"/><text x="170.06" y="684.30" font-size="3.4" fill="#fff" textLength="8.60" lengthAdjust="spacingAndGlyphs" font-weight="bold">إيجار</text><text x="121.56" y="771.30" font-size="4.4" fill="#2f4370" textLength="62.40" lengthAdjust="spacingAndGlyphs" font-weight="bold" opacity="0.9">برج الاعمال التجارية . حي السلام</text><path d="M180.61,779.70 a1.35,1.35 0 1 1 2.70,0 q0,1.22 -1.35,2.84 q-1.35,-1.62 -1.35,-2.84 Z" fill="#0f2f6e"/><circle cx="181.96" cy="779.70" r="0.51" fill="#fff" opacity="0.8"/><text x="158.56" y="781.56" font-size="3.2" fill="#27365c" textLength="19.70" lengthAdjust="spacingAndGlyphs" font-weight="bold">مكة، السعودية</text><path d="M145.86,778.9 h3.6 v2.4 h-1.5 l-1.1,1 v-1 h-1 Z" fill="#0f2f6e"/><text x="121.96" y="781.56" font-size="3.2" fill="#27365c" textLength="22.40" lengthAdjust="spacingAndGlyphs" font-weight="bold">2000 قدم مربع</text><rect x="132.66" y="787.90" width="51.80" height="11.50" fill="#0f2f6e" rx="1.8"/><path d="M143.05,793.65 H139.65 M140.95,792.45 L139.65,793.65 L140.95,794.85" stroke="#fff" stroke-width="0.7" fill="none"/><text x="151.83" y="794.95" font-size="3.9" fill="#fff" textLength="25.38" lengthAdjust="spacingAndGlyphs" font-weight="bold">اكتشف المزيد</text><rect x="195.29" y="671.70" width="78.40" height="131.30" fill="#f1f4fa" rx="2"/><svg x="198.29" y="675" width="72.2" height="86.7" viewBox="30 0 64 77" preserveAspectRatio="none" style="overflow:hidden"><use href="#tower" x="0" y="0" width="123" height="77"/></svg><rect x="247.79" y="678.80" width="18.50" height="8.20" fill="#0f2f6e" rx="1.2"/><text x="252.69" y="684.30" font-size="3.4" fill="#fff" textLength="8.60" lengthAdjust="spacingAndGlyphs" font-weight="bold">للبيع</text><text x="204.19" y="771.30" font-size="4.4" fill="#2f4370" textLength="62.40" lengthAdjust="spacingAndGlyphs" font-weight="bold" opacity="0.9">برج الاعمال التجارية . حي السلام</text><path d="M263.24,779.70 a1.35,1.35 0 1 1 2.70,0 q0,1.22 -1.35,2.84 q-1.35,-1.62 -1.35,-2.84 Z" fill="#0f2f6e"/><circle cx="264.59" cy="779.70" r="0.51" fill="#fff" opacity="0.8"/><text x="241.19" y="781.56" font-size="3.2" fill="#27365c" textLength="19.70" lengthAdjust="spacingAndGlyphs" font-weight="bold">مكة، السعودية</text><path d="M228.49,778.9 h3.6 v2.4 h-1.5 l-1.1,1 v-1 h-1 Z" fill="#0f2f6e"/><text x="204.59" y="781.56" font-size="3.2" fill="#27365c" textLength="22.40" lengthAdjust="spacingAndGlyphs" font-weight="bold">2000 قدم مربع</text><rect x="215.29" y="787.90" width="51.80" height="11.50" fill="#0f2f6e" rx="1.8"/><path d="M225.68,793.65 H222.28 M223.58,792.45 L222.28,793.65 L223.58,794.85" stroke="#fff" stroke-width="0.7" fill="none"/><text x="234.46" y="794.95" font-size="3.9" fill="#fff" textLength="25.38" lengthAdjust="spacingAndGlyphs" font-weight="bold">اكتشف المزيد</text><text x="139.00" y="862.50" font-size="7.4" fill="#1b3976" textLength="21.00" lengthAdjust="spacingAndGlyphs" font-weight="bold">المشاريع</text></svg></div>
<div class="a" style="left:803px;top:169px;width:300px;height:880px;overflow:hidden;background:#f1f4fa"><svg width="300" height="880" viewBox="0 0 300 880" style="left:0;top:0;overflow:hidden;font-family:'Liberation Sans',sans-serif"><rect x="0.00" y="0.00" width="300.00" height="880.00" fill="#f1f4fa"/><use href="#hero" x="0.00" y="0.00" width="300.00" height="162.40"/><rect x="25.00" y="5.40" width="40.60" height="9.90" fill="#0f2f6e" rx="1.8"/><text x="40.00" y="11.70" font-size="3.6" fill="#fff" textLength="10.50" lengthAdjust="spacingAndGlyphs" font-weight="bold">التوظيف</text><text x="92.00" y="11.70" font-size="3.3" fill="#fff" textLength="16.00" lengthAdjust="spacingAndGlyphs" opacity="0.92">تواصل معنا</text><text x="116.00" y="11.70" font-size="3.3" fill="#fff" textLength="12.00" lengthAdjust="spacingAndGlyphs" opacity="0.92">من نحن</text><text x="136.00" y="11.70" font-size="3.3" fill="#fff" textLength="13.00" lengthAdjust="spacingAndGlyphs" opacity="0.92">المشاريع</text><text x="157.00" y="11.70" font-size="3.3" fill="#fff" textLength="11.00" lengthAdjust="spacingAndGlyphs" opacity="0.92">خدماتنا</text><text x="176.00" y="11.70" font-size="3.3" fill="#fff" textLength="12.00" lengthAdjust="spacingAndGlyphs" opacity="0.92">العقارات</text><text x="197.00" y="11.70" font-size="3.3" fill="#fff" textLength="16.00" lengthAdjust="spacingAndGlyphs" opacity="0.92">فرع سيرافو</text><text x="221.00" y="11.70" font-size="3.3" fill="#fff" textLength="12.00" lengthAdjust="spacingAndGlyphs" opacity="0.92">الرئيسية</text><text x="259.70" y="12.60" font-size="6.2" fill="#fff" textLength="15.30" lengthAdjust="spacingAndGlyphs" font-weight="bold">Logo</text><text x="140.60" y="80.90" font-size="12.2" fill="#fff" textLength="133.60" lengthAdjust="spacingAndGlyphs" font-weight="bold">افضل العقارات للبيع  والايجار في</text><text x="231.00" y="94.40" font-size="12.2" fill="#fff" textLength="43.20" lengthAdjust="spacingAndGlyphs" font-weight="bold">مكان واحد</text><text x="155.50" y="103.75" font-size="3.5" fill="#ffffff" textLength="118.70" lengthAdjust="spacingAndGlyphs" opacity="0.92">في شركة الوافين للتجارة والمقاولات نقدم حلول متكاملة في البناء والتطوير العقاري ونحن</text><text x="185.00" y="108.75" font-size="3.5" fill="#ffffff" textLength="89.20" lengthAdjust="spacingAndGlyphs" opacity="0.92">مستعدون لتقديم أفضل الخدمات لعملائنا في المملكة وخارجها</text><rect x="229.20" y="116.00" width="45.00" height="10.90" fill="#0f2f6e" rx="1.8"/><path d="M238.67,121.45 H235.27 M236.57,120.25 L235.27,121.45 L236.57,122.65" stroke="#fff" stroke-width="0.7" fill="none"/><text x="245.85" y="122.75" font-size="3.9" fill="#fff" textLength="22.05" lengthAdjust="spacingAndGlyphs" font-weight="bold">اكتشف المزيد</text><text x="140.00" y="186.60" font-size="7.4" fill="#1b3976" textLength="20.80" lengthAdjust="spacingAndGlyphs" font-weight="bold">شركاء</text><text x="139.60" y="197.00" font-size="7.4" fill="#1b3976" textLength="21.40" lengthAdjust="spacingAndGlyphs" font-weight="bold">النجاح</text><rect x="24.90" y="209.00" width="41.10" height="23.00" fill="#ffffff"/><rect x="75.60" y="209.00" width="41.10" height="23.00" fill="#ffffff"/><rect x="126.40" y="209.00" width="40.60" height="23.00" fill="#ffffff"/><rect x="178.20" y="209.00" width="43.70" height="23.00" fill="#ffffff"/><rect x="233.40" y="209.00" width="41.10" height="23.00" fill="#ffffff"/><text x="28.30" y="223.60" font-size="5.6" fill="#c9ccd1" textLength="34.50" lengthAdjust="spacingAndGlyphs">AffinityWater</text><circle cx="96" cy="216" r="3.6" fill="none" stroke="#c9ccd1" stroke-width="1"/><text x="78.50" y="226.60" font-size="4.2" fill="#c9ccd1" textLength="35.00" lengthAdjust="spacingAndGlyphs" font-weight="bold">MANILA WATER</text><ellipse cx="146.7" cy="220.5" rx="14" ry="7.6" fill="#d3d5d9"/><ellipse cx="146.7" cy="220.5" rx="10" ry="4.6" fill="#eceded"/><text x="180.00" y="222.00" font-size="7.2" fill="#c4c7cc" textLength="21.00" lengthAdjust="spacingAndGlyphs" font-weight="bold">NALCO</text><text x="202.00" y="222.00" font-size="7.2" fill="#d5d7db" textLength="18.50" lengthAdjust="spacingAndGlyphs">Water</text><text x="180.00" y="227.60" font-size="2.9" fill="#c9ccd1" textLength="24.00" lengthAdjust="spacingAndGlyphs">An Ecolab Company</text><circle cx="254" cy="217.5" r="7.6" fill="#d7d9dd"/><path d="M246.4,217.5 H261.6" stroke="#fff" stroke-width="1.3"/><text x="236.00" y="227.60" font-size="5.6" fill="#c6c8cd" textLength="36.00" lengthAdjust="spacingAndGlyphs" font-weight="bold">AQUANATION</text><use href="#bldg" x="25.00" y="252.10" width="123.00" height="81.60"/><text x="245.70" y="266.00" font-size="8.4" fill="#1b3976" textLength="28.80" lengthAdjust="spacingAndGlyphs" font-weight="bold">عن شركة</text><text x="251.20" y="276.00" font-size="8.4" fill="#1b3976" textLength="23.30" lengthAdjust="spacingAndGlyphs" font-weight="bold">الوافين</text><text x="166.90" y="287.75" font-size="3.5" fill="#6d7484" textLength="107.50" lengthAdjust="spacingAndGlyphs" opacity="0.9">نحن شركة سعودية تأسست في التجارة والمقاولات، ملتزمون بتقديم خدمات</text><text x="167.60" y="292.75" font-size="3.5" fill="#6d7484" textLength="106.80" lengthAdjust="spacingAndGlyphs" opacity="0.9">عالية الجودة في التطوير والبناء. تأسست الشركة لتحقيق رؤية واضحة: تحويل</text><text x="166.20" y="298.45" font-size="3.5" fill="#6d7484" textLength="108.20" lengthAdjust="spacingAndGlyphs" opacity="0.9">الأفكار إلى مشاريع واقعية تساهم في بناء مستقبل مشرق. بفضل فريقنا المميز</text><text x="173.70" y="303.55" font-size="3.5" fill="#6d7484" textLength="100.70" lengthAdjust="spacingAndGlyphs" opacity="0.9">وشراكاتنا القوية، نجحنا في تحقيق مشاريع تلبي طموح عملائنا سواء داخل</text><text x="248.20" y="309.45" font-size="3.5" fill="#6d7484" textLength="26.20" lengthAdjust="spacingAndGlyphs" opacity="0.9">المملكة أو خارجها.</text><rect x="229.90" y="316.30" width="44.50" height="11.70" fill="#0f2f6e" rx="1.8"/><path d="M239.31,322.15 H235.91 M237.21,320.95 L235.91,322.15 L237.21,323.35" stroke="#fff" stroke-width="0.7" fill="none"/><text x="246.37" y="323.45" font-size="3.9" fill="#fff" textLength="21.80" lengthAdjust="spacingAndGlyphs" font-weight="bold">اكتشف المزيد</text><rect x="0.00" y="352.00" width="300.00" height="484.70" fill="#ffffff"/><rect x="24.90" y="374.30" width="44.60" height="11.70" fill="#0f2f6e" rx="1.8"/><path d="M34.32,380.15 H30.92 M32.22,378.95 L30.92,380.15 L32.22,381.35" stroke="#fff" stroke-width="0.7" fill="none"/><text x="41.40" y="381.45" font-size="3.9" fill="#fff" textLength="21.85" lengthAdjust="spacingAndGlyphs" font-weight="bold">اكتشف المزيد</text><text x="239.50" y="379.40" font-size="7.4" fill="#1b3976" textLength="34.70" lengthAdjust="spacingAndGlyphs" font-weight="bold">خدمات تلبي</text><text x="239.80" y="389.40" font-size="7.4" fill="#1b3976" textLength="34.40" lengthAdjust="spacingAndGlyphs" font-weight="bold">احتياجاتكم</text><use href="#park" x="24.90" y="401.30" width="123.00" height="76.70"/><text x="117.00" y="488.80" font-size="6.2" fill="#1b3976" textLength="30.30" lengthAdjust="spacingAndGlyphs" font-weight="bold">البيع والشراء</text><text x="51.30" y="494.97" font-size="2.9" fill="#6d7484" textLength="96.00" lengthAdjust="spacingAndGlyphs" opacity="0.85">إعادة وتطوير العقار مع التركيز على الجودة والابتكار لضمان راحة العملاء</text><text x="105.80" y="500.47" font-size="2.9" fill="#6d7484" textLength="41.50" lengthAdjust="spacingAndGlyphs" opacity="0.85">وتحقيق أقصى عوائد استثمارية.</text><use href="#bldg" x="151.90" y="401.30" width="123.00" height="76.70"/><text x="239.00" y="488.80" font-size="6.2" fill="#1b3976" textLength="35.30" lengthAdjust="spacingAndGlyphs" font-weight="bold">التطوير العقاري</text><text x="178.30" y="494.97" font-size="2.9" fill="#6d7484" textLength="96.00" lengthAdjust="spacingAndGlyphs" opacity="0.85">إعادة وتطوير العقار مع التركيز على الجودة والابتكار لضمان راحة العملاء</text><text x="232.80" y="500.47" font-size="2.9" fill="#6d7484" textLength="41.50" lengthAdjust="spacingAndGlyphs" opacity="0.85">وتحقيق أقصى عوائد استثمارية.</text><use href="#street" x="24.90" y="507.00" width="123.00" height="76.70"/><text x="111.10" y="594.50" font-size="6.2" fill="#1b3976" textLength="36.20" lengthAdjust="spacingAndGlyphs" font-weight="bold">التطوير العقاري</text><text x="51.30" y="600.67" font-size="2.9" fill="#6d7484" textLength="96.00" lengthAdjust="spacingAndGlyphs" opacity="0.85">إعادة وتطوير العقار مع التركيز على الجودة والابتكار لضمان راحة العملاء</text><text x="105.80" y="606.17" font-size="2.9" fill="#6d7484" textLength="41.50" lengthAdjust="spacingAndGlyphs" opacity="0.85">وتحقيق أقصى عوائد استثمارية.</text><use href="#tower" x="151.90" y="507.00" width="123.00" height="76.70"/><text x="226.90" y="594.50" font-size="6.2" fill="#1b3976" textLength="47.40" lengthAdjust="spacingAndGlyphs" font-weight="bold">الخدمات الاستثمارية</text><text x="178.30" y="600.67" font-size="2.9" fill="#6d7484" textLength="96.00" lengthAdjust="spacingAndGlyphs" opacity="0.85">إعادة وتطوير العقار مع التركيز على الجودة والابتكار لضمان راحة العملاء</text><text x="232.80" y="606.17" font-size="2.9" fill="#6d7484" textLength="41.50" lengthAdjust="spacingAndGlyphs" opacity="0.85">وتحقيق أقصى عوائد استثمارية.</text><text x="247.00" y="648.00" font-size="7.4" fill="#1b3976" textLength="27.20" lengthAdjust="spacingAndGlyphs" font-weight="bold">مشاريعنا</text><text x="250.00" y="659.00" font-size="7.4" fill="#1b3976" textLength="24.20" lengthAdjust="spacingAndGlyphs" font-weight="bold">الناجحة</text><rect x="25.10" y="645.40" width="44.70" height="11.60" fill="#0f2f6e" rx="1.8"/><path d="M34.53,651.20 H31.13 M32.43,650.00 L31.13,651.20 L32.43,652.40" stroke="#fff" stroke-width="0.7" fill="none"/><text x="41.64" y="652.50" font-size="3.9" fill="#fff" textLength="21.90" lengthAdjust="spacingAndGlyphs" font-weight="bold">اكتشف المزيد</text><rect x="-52.60" y="671.70" width="78.40" height="131.30" fill="#f1f4fa" rx="2"/><use href="#gold" x="-49.60" y="675.00" width="72.20" height="86.70"/><rect x="-0.10" y="678.80" width="18.50" height="8.20" fill="#0f2f6e" rx="1.2"/><text x="4.80" y="684.30" font-size="3.4" fill="#fff" textLength="8.60" lengthAdjust="spacingAndGlyphs" font-weight="bold">للبيع</text><text x="-43.70" y="771.30" font-size="4.4" fill="#2f4370" textLength="62.40" lengthAdjust="spacingAndGlyphs" font-weight="bold" opacity="0.9">برج الاعمال التجارية . حي السلام</text><path d="M15.35,779.70 a1.35,1.35 0 1 1 2.70,0 q0,1.22 -1.35,2.84 q-1.35,-1.62 -1.35,-2.84 Z" fill="#0f2f6e"/><circle cx="16.70" cy="779.70" r="0.51" fill="#fff" opacity="0.8"/><text x="-6.70" y="781.56" font-size="3.2" fill="#27365c" textLength="19.70" lengthAdjust="spacingAndGlyphs" font-weight="bold">مكة، السعودية</text><path d="M-19.40,778.9 h3.6 v2.4 h-1.5 l-1.1,1 v-1 h-1 Z" fill="#0f2f6e"/><text x="-43.30" y="781.56" font-size="3.2" fill="#27365c" textLength="22.40" lengthAdjust="spacingAndGlyphs" font-weight="bold">2000 قدم مربع</text><rect x="-32.60" y="787.90" width="51.80" height="11.50" fill="#0f2f6e" rx="1.8"/><path d="M-22.21,793.65 H-25.61 M-24.31,792.45 L-25.61,793.65 L-24.31,794.85" stroke="#fff" stroke-width="0.7" fill="none"/><text x="-13.43" y="794.95" font-size="3.9" fill="#fff" textLength="25.38" lengthAdjust="spacingAndGlyphs" font-weight="bold">اكتشف المزيد</text><rect x="30.03" y="671.70" width="78.40" height="131.30" fill="#f1f4fa" rx="2"/><use href="#arch" x="33.03" y="675.00" width="72.20" height="86.70"/><rect x="82.53" y="678.80" width="18.50" height="8.20" fill="#0f2f6e" rx="1.2"/><text x="87.43" y="684.30" font-size="3.4" fill="#fff" textLength="8.60" lengthAdjust="spacingAndGlyphs" font-weight="bold">للبيع</text><text x="38.93" y="771.30" font-size="4.4" fill="#2f4370" textLength="62.40" lengthAdjust="spacingAndGlyphs" font-weight="bold" opacity="0.9">برج الاعمال التجارية . حي السلام</text><path d="M97.98,779.70 a1.35,1.35 0 1 1 2.70,0 q0,1.22 -1.35,2.84 q-1.35,-1.62 -1.35,-2.84 Z" fill="#0f2f6e"/><circle cx="99.33" cy="779.70" r="0.51" fill="#fff" opacity="0.8"/><text x="75.93" y="781.56" font-size="3.2" fill="#27365c" textLength="19.70" lengthAdjust="spacingAndGlyphs" font-weight="bold">مكة، السعودية</text><path d="M63.23,778.9 h3.6 v2.4 h-1.5 l-1.1,1 v-1 h-1 Z" fill="#0f2f6e"/><text x="39.33" y="781.56" font-size="3.2" fill="#27365c" textLength="22.40" lengthAdjust="spacingAndGlyphs" font-weight="bold">2000 قدم مربع</text><rect x="50.03" y="787.90" width="51.80" height="11.50" fill="#0f2f6e" rx="1.8"/><path d="M60.42,793.65 H57.02 M58.32,792.45 L57.02,793.65 L58.32,794.85" stroke="#fff" stroke-width="0.7" fill="none"/><text x="69.20" y="794.95" font-size="3.9" fill="#fff" textLength="25.38" lengthAdjust="spacingAndGlyphs" font-weight="bold">اكتشف المزيد</text><rect x="112.66" y="671.70" width="78.40" height="131.30" fill="#f1f4fa" rx="2"/><svg x="115.66" y="675" width="72.2" height="86.7" viewBox="24 0 68.3 82" preserveAspectRatio="none" style="overflow:hidden"><use href="#bldg" x="0" y="0" width="123" height="82"/></svg><rect x="165.16" y="678.80" width="18.50" height="8.20" fill="#0f2f6e" rx="1.2"/><text x="170.06" y="684.30" font-size="3.4" fill="#fff" textLength="8.60" lengthAdjust="spacingAndGlyphs" font-weight="bold">إيجار</text><text x="121.56" y="771.30" font-size="4.4" fill="#2f4370" textLength="62.40" lengthAdjust="spacingAndGlyphs" font-weight="bold" opacity="0.9">برج الاعمال التجارية . حي السلام</text><path d="M180.61,779.70 a1.35,1.35 0 1 1 2.70,0 q0,1.22 -1.35,2.84 q-1.35,-1.62 -1.35,-2.84 Z" fill="#0f2f6e"/><circle cx="181.96" cy="779.70" r="0.51" fill="#fff" opacity="0.8"/><text x="158.56" y="781.56" font-size="3.2" fill="#27365c" textLength="19.70" lengthAdjust="spacingAndGlyphs" font-weight="bold">مكة، السعودية</text><path d="M145.86,778.9 h3.6 v2.4 h-1.5 l-1.1,1 v-1 h-1 Z" fill="#0f2f6e"/><text x="121.96" y="781.56" font-size="3.2" fill="#27365c" textLength="22.40" lengthAdjust="spacingAndGlyphs" font-weight="bold">2000 قدم مربع</text><rect x="132.66" y="787.90" width="51.80" height="11.50" fill="#0f2f6e" rx="1.8"/><path d="M143.05,793.65 H139.65 M140.95,792.45 L139.65,793.65 L140.95,794.85" stroke="#fff" stroke-width="0.7" fill="none"/><text x="151.83" y="794.95" font-size="3.9" fill="#fff" textLength="25.38" lengthAdjust="spacingAndGlyphs" font-weight="bold">اكتشف المزيد</text><rect x="195.29" y="671.70" width="78.40" height="131.30" fill="#f1f4fa" rx="2"/><svg x="198.29" y="675" width="72.2" height="86.7" viewBox="30 0 64 77" preserveAspectRatio="none" style="overflow:hidden"><use href="#tower" x="0" y="0" width="123" height="77"/></svg><rect x="247.79" y="678.80" width="18.50" height="8.20" fill="#0f2f6e" rx="1.2"/><text x="252.69" y="684.30" font-size="3.4" fill="#fff" textLength="8.60" lengthAdjust="spacingAndGlyphs" font-weight="bold">للبيع</text><text x="204.19" y="771.30" font-size="4.4" fill="#2f4370" textLength="62.40" lengthAdjust="spacingAndGlyphs" font-weight="bold" opacity="0.9">برج الاعمال التجارية . حي السلام</text><path d="M263.24,779.70 a1.35,1.35 0 1 1 2.70,0 q0,1.22 -1.35,2.84 q-1.35,-1.62 -1.35,-2.84 Z" fill="#0f2f6e"/><circle cx="264.59" cy="779.70" r="0.51" fill="#fff" opacity="0.8"/><text x="241.19" y="781.56" font-size="3.2" fill="#27365c" textLength="19.70" lengthAdjust="spacingAndGlyphs" font-weight="bold">مكة، السعودية</text><path d="M228.49,778.9 h3.6 v2.4 h-1.5 l-1.1,1 v-1 h-1 Z" fill="#0f2f6e"/><text x="204.59" y="781.56" font-size="3.2" fill="#27365c" textLength="22.40" lengthAdjust="spacingAndGlyphs" font-weight="bold">2000 قدم مربع</text><rect x="215.29" y="787.90" width="51.80" height="11.50" fill="#0f2f6e" rx="1.8"/><path d="M225.68,793.65 H222.28 M223.58,792.45 L222.28,793.65 L223.58,794.85" stroke="#fff" stroke-width="0.7" fill="none"/><text x="234.46" y="794.95" font-size="3.9" fill="#fff" textLength="25.38" lengthAdjust="spacingAndGlyphs" font-weight="bold">اكتشف المزيد</text><text x="139.00" y="862.50" font-size="7.4" fill="#1b3976" textLength="21.00" lengthAdjust="spacingAndGlyphs" font-weight="bold">المشاريع</text></svg></div>
<span class="t" style="left:454.00px;top:148.50px;font-size:14.4px;color:#b3b3b3;letter-spacing:-0.118px;">Home screen  1</span>
<span class="t" style="left:803.00px;top:148.50px;font-size:14.4px;color:#b3b3b3;letter-spacing:0.079px;">Home screen</span>
<div class="a" style="left:801px;top:167px;width:305px;height:25.5px;background:transparent;border:2.4px solid #0d99ff;"></div>
<div class="a" style="left:1138px;top:169px;width:300px;height:598.5px;overflow:hidden;background:#fff"><svg width="300" height="598.5" viewBox="0 0 300 598.5" style="left:0;top:0;overflow:hidden;font-family:'Liberation Sans',sans-serif"><rect x="0.00" y="0.00" width="300.00" height="598.50" fill="#ffffff"/><rect x="0.00" y="0.00" width="300.00" height="30.00" fill="#ffffff"/><rect x="25.00" y="9.10" width="40.90" height="10.20" fill="#0f2f6e" rx="1.8"/><text x="40.10" y="15.50" font-size="3.6" fill="#fff" textLength="10.50" lengthAdjust="spacingAndGlyphs" font-weight="bold">التوظيف</text><text x="92.50" y="15.60" font-size="3.3" fill="#4a5368" textLength="16.00" lengthAdjust="spacingAndGlyphs" opacity="0.95">تواصل معنا</text><text x="116.50" y="15.60" font-size="3.3" fill="#1d4fb0" textLength="12.00" lengthAdjust="spacingAndGlyphs" opacity="0.95">من نحن</text><text x="136.50" y="15.60" font-size="3.3" fill="#4a5368" textLength="13.00" lengthAdjust="spacingAndGlyphs" opacity="0.95">المشاريع</text><text x="157.50" y="15.60" font-size="3.3" fill="#4a5368" textLength="11.00" lengthAdjust="spacingAndGlyphs" opacity="0.95">خدماتنا</text><text x="176.50" y="15.60" font-size="3.3" fill="#4a5368" textLength="12.00" lengthAdjust="spacingAndGlyphs" opacity="0.95">العقارات</text><text x="197.50" y="15.60" font-size="3.3" fill="#4a5368" textLength="16.00" lengthAdjust="spacingAndGlyphs" opacity="0.95">فرع سيرافو</text><text x="221.50" y="15.60" font-size="3.3" fill="#4a5368" textLength="12.00" lengthAdjust="spacingAndGlyphs" opacity="0.95">الرئيسية</text><text x="259.70" y="16.40" font-size="6.2" fill="#1b3976" textLength="15.30" lengthAdjust="spacingAndGlyphs" font-weight="bold">Logo</text><svg x="0" y="30" width="300" height="47.7" viewBox="0 89 300 47.7" preserveAspectRatio="none" style="overflow:hidden"><use href="#hero" x="0" y="0" width="300" height="163"/></svg><rect x="0.00" y="30.00" width="300.00" height="47.70" fill="#1a2536" opacity="0.3"/><text x="257.00" y="51.60" font-size="6.2" fill="#fff" textLength="18.00" lengthAdjust="spacingAndGlyphs" font-weight="bold">من نحن</text><text x="246.00" y="59.68" font-size="3.6" fill="#ffffff" textLength="29.00" lengthAdjust="spacingAndGlyphs" font-weight="bold" opacity="0.95">الرئيسية / من نحن</text><rect x="0.00" y="96.00" width="300.00" height="322.70" fill="#f1f4fa"/><text x="256.00" y="109.60" font-size="6.4" fill="#1b3976" textLength="19.00" lengthAdjust="spacingAndGlyphs" font-weight="bold">من نحن</text><use href="#bldg" x="25.00" y="116.90" width="123.10" height="94.10"/><text x="166.00" y="123.87" font-size="4.9" fill="#6d7484" textLength="109.00" lengthAdjust="spacingAndGlyphs" opacity="0.9">هناك حقيقة مثبتة منذ زمن طويل وهي أن المحتوى المقروء</text><text x="171.00" y="130.74" font-size="4.9" fill="#6d7484" textLength="104.00" lengthAdjust="spacingAndGlyphs" opacity="0.9">لصفحة ما سيلهي القارئ عن التركيز على الشكل الخارجي</text><text x="166.00" y="137.61" font-size="4.9" fill="#6d7484" textLength="109.00" lengthAdjust="spacingAndGlyphs" opacity="0.9">للنص أو شكل توضع الفقرات في الصفحة التي يقرأها. ولذلك</text><text x="162.00" y="144.48" font-size="4.9" fill="#6d7484" textLength="113.00" lengthAdjust="spacingAndGlyphs" opacity="0.9">يتم استخدام طريقة لوريم إيبسوم لأنها تعطي توزيعاَ طبيعياَ -إلى</text><text x="161.00" y="151.35" font-size="4.9" fill="#6d7484" textLength="114.00" lengthAdjust="spacingAndGlyphs" opacity="0.9">حد ما- للأحرف عوضاً عن استخدام "هنا يوجد محتوى نصي، هنا</text><text x="172.00" y="158.22" font-size="4.9" fill="#6d7484" textLength="103.00" lengthAdjust="spacingAndGlyphs" opacity="0.9">يوجد محتوى نصي" فتجعلها تبدو (أي الأحرف) وكأنها نص</text><text x="162.00" y="165.09" font-size="4.9" fill="#6d7484" textLength="113.00" lengthAdjust="spacingAndGlyphs" opacity="0.9">مقروء. العديد من برامح النشر المكتبي وبرامح تحرير صفحات</text><text x="172.00" y="171.96" font-size="4.9" fill="#6d7484" textLength="103.00" lengthAdjust="spacingAndGlyphs" opacity="0.9">الويب تستخدم لوريم إيبسوم بشكل إفتراضي كنموذج عن</text><text x="161.60" y="178.83" font-size="4.9" fill="#6d7484" textLength="113.40" lengthAdjust="spacingAndGlyphs" opacity="0.9">النص، وإذا قمت بإدخال في أي محرك بحث ستظهر العديد من</text><text x="173.00" y="185.70" font-size="4.9" fill="#6d7484" textLength="102.00" lengthAdjust="spacingAndGlyphs" opacity="0.9">المواقع الحديثة العهد في نتائج البحث. على مدى السنين</text><text x="165.00" y="192.57" font-size="4.9" fill="#6d7484" textLength="110.00" lengthAdjust="spacingAndGlyphs" opacity="0.9">ظهرت نسخ جديدة ومختلفة من نص لوريم إيبسوم، أحياناً عن</text><text x="164.00" y="199.44" font-size="4.9" fill="#6d7484" textLength="111.00" lengthAdjust="spacingAndGlyphs" opacity="0.9">طريق الصدفة، وأحياناً عن عمد كإدخال بعض العبارات الفكاهية</text><text x="216.00" y="206.31" font-size="4.9" fill="#6d7484" textLength="59.00" lengthAdjust="spacingAndGlyphs" opacity="0.9">إليها وأحياناً عن عمد كإدخال بعض.</text><text x="32.00" y="222.07" font-size="4.9" fill="#6d7484" textLength="243.00" lengthAdjust="spacingAndGlyphs" opacity="0.9">هناك حقيقة مثبتة منذ زمن طويل وهي أن المحتوى المقروء لصفحة ما سيلهي القارئ عن التركيز على الشكل الخارجي للنص أو شكل</text><text x="28.00" y="229.57" font-size="4.9" fill="#6d7484" textLength="247.00" lengthAdjust="spacingAndGlyphs" opacity="0.9">توضع الفقرات في الصفحة التي يقرأها. ولذلك يتم استخدام طريقة لوريم إيبسوم لأنها تعطي توزيعاَ طبيعياَ -إلى حد ما- للأحرف عوضاً عن</text><text x="30.00" y="237.07" font-size="4.9" fill="#6d7484" textLength="245.00" lengthAdjust="spacingAndGlyphs" opacity="0.9">استخدام "هنا يوجد محتوى نصي، هنا يوجد محتوى نصي" فتجعلها تبدو (أي الأحرف) وكأنها نص مقروء. العديد من برامح النشر المكتبي .</text><use href="#bldg" x="151.90" y="257.80" width="123.10" height="93.70"/><text x="32.70" y="264.07" font-size="4.9" fill="#6d7484" textLength="109.00" lengthAdjust="spacingAndGlyphs" opacity="0.9">هناك حقيقة مثبتة منذ زمن طويل وهي أن المحتوى المقروء</text><text x="37.70" y="271.04" font-size="4.9" fill="#6d7484" textLength="104.00" lengthAdjust="spacingAndGlyphs" opacity="0.9">لصفحة ما سيلهي القارئ عن التركيز على الشكل الخارجي</text><text x="32.70" y="278.01" font-size="4.9" fill="#6d7484" textLength="109.00" lengthAdjust="spacingAndGlyphs" opacity="0.9">للنص أو شكل توضع الفقرات في الصفحة التي يقرأها. ولذلك</text><text x="28.70" y="284.98" font-size="4.9" fill="#6d7484" textLength="113.00" lengthAdjust="spacingAndGlyphs" opacity="0.9">يتم استخدام طريقة لوريم إيبسوم لأنها تعطي توزيعاَ طبيعياَ -إلى</text><text x="27.70" y="291.95" font-size="4.9" fill="#6d7484" textLength="114.00" lengthAdjust="spacingAndGlyphs" opacity="0.9">حد ما- للأحرف عوضاً عن استخدام "هنا يوجد محتوى نصي، هنا</text><text x="38.70" y="298.92" font-size="4.9" fill="#6d7484" textLength="103.00" lengthAdjust="spacingAndGlyphs" opacity="0.9">يوجد محتوى نصي" فتجعلها تبدو (أي الأحرف) وكأنها نص</text><text x="28.70" y="305.89" font-size="4.9" fill="#6d7484" textLength="113.00" lengthAdjust="spacingAndGlyphs" opacity="0.9">مقروء. العديد من برامح النشر المكتبي وبرامح تحرير صفحات</text><text x="38.70" y="312.86" font-size="4.9" fill="#6d7484" textLength="103.00" lengthAdjust="spacingAndGlyphs" opacity="0.9">الويب تستخدم لوريم إيبسوم بشكل إفتراضي كنموذج عن</text><text x="28.30" y="319.83" font-size="4.9" fill="#6d7484" textLength="113.40" lengthAdjust="spacingAndGlyphs" opacity="0.9">النص، وإذا قمت بإدخال في أي محرك بحث ستظهر العديد من</text><text x="39.70" y="326.80" font-size="4.9" fill="#6d7484" textLength="102.00" lengthAdjust="spacingAndGlyphs" opacity="0.9">المواقع الحديثة العهد في نتائج البحث. على مدى السنين</text><text x="31.70" y="333.77" font-size="4.9" fill="#6d7484" textLength="110.00" lengthAdjust="spacingAndGlyphs" opacity="0.9">ظهرت نسخ جديدة ومختلفة من نص لوريم إيبسوم، أحياناً عن</text><text x="30.70" y="340.74" font-size="4.9" fill="#6d7484" textLength="111.00" lengthAdjust="spacingAndGlyphs" opacity="0.9">طريق الصدفة، وأحياناً عن عمد كإدخال بعض العبارات الفكاهية</text><text x="82.70" y="347.71" font-size="4.9" fill="#6d7484" textLength="59.00" lengthAdjust="spacingAndGlyphs" opacity="0.9">إليها وأحياناً عن عمد كإدخال بعض.</text><text x="32.00" y="362.67" font-size="4.9" fill="#6d7484" textLength="243.00" lengthAdjust="spacingAndGlyphs" opacity="0.9">هناك حقيقة مثبتة منذ زمن طويل وهي أن المحتوى المقروء لصفحة ما سيلهي القارئ عن التركيز على الشكل الخارجي للنص أو شكل</text><text x="28.00" y="370.17" font-size="4.9" fill="#6d7484" textLength="247.00" lengthAdjust="spacingAndGlyphs" opacity="0.9">توضع الفقرات في الصفحة التي يقرأها. ولذلك يتم استخدام طريقة لوريم إيبسوم لأنها تعطي توزيعاَ طبيعياَ -إلى حد ما- للأحرف عوضاً عن</text><text x="30.00" y="377.67" font-size="4.9" fill="#6d7484" textLength="245.00" lengthAdjust="spacingAndGlyphs" opacity="0.9">استخدام "هنا يوجد محتوى نصي، هنا يوجد محتوى نصي" فتجعلها تبدو (أي الأحرف) وكأنها نص مقروء. العديد من برامح النشر المكتبي .</text><rect x="0.00" y="489.00" width="300.00" height="109.50" fill="#0f2f6e"/><rect x="42.90" y="472.90" width="214.90" height="32.50" fill="#3d65a6" rx="2"/><rect x="52.80" y="483.60" width="45.10" height="11.20" fill="#0f2f6e" rx="0.6"/><text x="69.10" y="491.10" font-size="4.6" fill="#fff" textLength="12.40" lengthAdjust="spacingAndGlyphs" font-weight="bold">إرسال</text><rect x="102.00" y="483.60" width="91.20" height="11.20" fill="#ffffff" rx="0.6"/><text x="164.90" y="490.32" font-size="3.4" fill="#9aa1b0" textLength="22.50" lengthAdjust="spacingAndGlyphs" opacity="0.9">البريد الالكتروني</text><text x="210.90" y="487.12" font-size="3.4" fill="#ffffff" textLength="36.60" lengthAdjust="spacingAndGlyphs" opacity="0.85">اتصل بنا في افضل العروض</text><text x="224.00" y="493.20" font-size="5" fill="#fff" textLength="23.60" lengthAdjust="spacingAndGlyphs" font-weight="bold">تواصل معنا</text><text x="253.00" y="541.20" font-size="6" fill="#fff" textLength="15.20" lengthAdjust="spacingAndGlyphs" font-weight="bold">Logo</text><circle cx="250.5" cy="555.4" r="3.9" fill="none" stroke="#fff" stroke-width="0.6"/><circle cx="250.5" cy="555.4" r="1.5" fill="#fff" opacity="0.85"/><circle cx="260.6" cy="555.4" r="3.9" fill="none" stroke="#fff" stroke-width="0.6"/><circle cx="260.6" cy="555.4" r="1.5" fill="#fff" opacity="0.85"/><circle cx="270.8" cy="555.4" r="3.9" fill="none" stroke="#fff" stroke-width="0.6"/><circle cx="270.8" cy="555.4" r="1.5" fill="#fff" opacity="0.85"/><text x="207.90" y="530.00" font-size="4.6" fill="#fff" textLength="21.00" lengthAdjust="spacingAndGlyphs" font-weight="bold">روابط هامة</text><text x="217.40" y="537.95" font-size="3.5" fill="#ffffff" textLength="11.50" lengthAdjust="spacingAndGlyphs" opacity="0.85">الرئيسية</text><text x="216.40" y="545.65" font-size="3.5" fill="#ffffff" textLength="12.50" lengthAdjust="spacingAndGlyphs" opacity="0.85">الخدمات</text><text x="216.90" y="553.35" font-size="3.5" fill="#ffffff" textLength="12.00" lengthAdjust="spacingAndGlyphs" opacity="0.85">المشاريع</text><text x="217.40" y="561.05" font-size="3.5" fill="#ffffff" textLength="11.50" lengthAdjust="spacingAndGlyphs" opacity="0.85">من نحن</text><text x="217.40" y="568.75" font-size="3.5" fill="#ffffff" textLength="11.50" lengthAdjust="spacingAndGlyphs" opacity="0.85">العقارات</text><text x="167.80" y="530.00" font-size="4.6" fill="#fff" textLength="22.00" lengthAdjust="spacingAndGlyphs" font-weight="bold">تواصل معنا</text><path d="M186.00,536.60 a1.7,1.7 0 1 1 3.40,0 q0,1.53 -1.7,3.57 q-1.7,-2.04 -1.7,-3.57 Z" fill="#ffffff"/><circle cx="187.70" cy="536.60" r="0.65" fill="#0f2f6e"/><text x="137.00" y="538.28" font-size="3.6" fill="#ffffff" textLength="46.50" lengthAdjust="spacingAndGlyphs" opacity="0.9">الرياض، المملكة العربية السعودية</text><path d="M186.00,547.00 a1.7,1.7 0 1 1 3.40,0 q0,1.53 -1.7,3.57 q-1.7,-2.04 -1.7,-3.57 Z" fill="#ffffff"/><circle cx="187.70" cy="547.00" r="0.65" fill="#0f2f6e"/><text x="172.00" y="548.68" font-size="3.6" fill="#ffffff" textLength="11.50" lengthAdjust="spacingAndGlyphs" opacity="0.9">سيرافو</text><circle cx="117.4" cy="538.5" r="1.7" fill="#fff"/><text x="90.90" y="539.80" font-size="3.8" fill="#fff" textLength="22.10" lengthAdjust="spacingAndGlyphs" opacity="0.9">0568664856</text><rect x="25.20" y="537.00" width="5.40" height="3.60" fill="#ffffff" rx="0.5"/><text x="33.60" y="540.10" font-size="4.3" fill="#fff" textLength="40.10" lengthAdjust="spacingAndGlyphs" opacity="0.9">alwafin1@gmail.com</text><circle cx="117.4" cy="548.7" r="1.7" fill="#fff"/><text x="90.90" y="550.00" font-size="3.8" fill="#fff" textLength="22.10" lengthAdjust="spacingAndGlyphs" opacity="0.9">0568664856</text><rect x="25.20" y="547.20" width="5.40" height="3.60" fill="#ffffff" rx="0.5"/><text x="33.60" y="550.30" font-size="4.3" fill="#fff" textLength="40.10" lengthAdjust="spacingAndGlyphs" opacity="0.9">alwafin1@gmail.com</text></svg></div>
<div class="a" style="left:1462px;top:169px;width:156px;height:627px;overflow:hidden;background:#fff"><svg width="300" height="627" viewBox="0 0 300 627" style="left:0;top:0;overflow:hidden;font-family:'Liberation Sans',sans-serif"><rect x="0.00" y="0.00" width="300.00" height="627.00" fill="#ffffff"/><rect x="0.00" y="0.00" width="300.00" height="30.00" fill="#ffffff"/><rect x="25.00" y="9.10" width="40.90" height="10.20" fill="#0f2f6e" rx="1.8"/><text x="40.10" y="15.50" font-size="3.6" fill="#fff" textLength="10.50" lengthAdjust="spacingAndGlyphs" font-weight="bold">التوظيف</text><text x="92.50" y="15.60" font-size="3.3" fill="#4a5368" textLength="16.00" lengthAdjust="spacingAndGlyphs" opacity="0.95">تواصل معنا</text><text x="116.50" y="15.60" font-size="3.3" fill="#4a5368" textLength="12.00" lengthAdjust="spacingAndGlyphs" opacity="0.95">من نحن</text><text x="136.50" y="15.60" font-size="3.3" fill="#4a5368" textLength="13.00" lengthAdjust="spacingAndGlyphs" opacity="0.95">المشاريع</text><text x="157.50" y="15.60" font-size="3.3" fill="#1d4fb0" textLength="11.00" lengthAdjust="spacingAndGlyphs" opacity="0.95">خدماتنا</text><text x="176.50" y="15.60" font-size="3.3" fill="#4a5368" textLength="12.00" lengthAdjust="spacingAndGlyphs" opacity="0.95">العقارات</text><text x="197.50" y="15.60" font-size="3.3" fill="#4a5368" textLength="16.00" lengthAdjust="spacingAndGlyphs" opacity="0.95">فرع سيرافو</text><text x="221.50" y="15.60" font-size="3.3" fill="#4a5368" textLength="12.00" lengthAdjust="spacingAndGlyphs" opacity="0.95">الرئيسية</text><text x="259.70" y="16.40" font-size="6.2" fill="#1b3976" textLength="15.30" lengthAdjust="spacingAndGlyphs" font-weight="bold">Logo</text><svg x="0" y="30" width="300" height="47.7" viewBox="0 89 300 47.7" preserveAspectRatio="none" style="overflow:hidden"><use href="#hero" x="0" y="0" width="300" height="163"/></svg><rect x="0.00" y="30.00" width="300.00" height="47.70" fill="#1a2536" opacity="0.3"/><use href="#park" x="25.60" y="128.40" width="122.00" height="76.20"/><use href="#bldg" x="152.00" y="128.40" width="122.00" height="76.20"/><text x="117.20" y="215.50" font-size="6.2" fill="#1b3976" textLength="30.30" lengthAdjust="spacingAndGlyphs" font-weight="bold">البيع والشراء</text><text x="52.00" y="221.57" font-size="2.9" fill="#6d7484" textLength="95.50" lengthAdjust="spacingAndGlyphs" opacity="0.85">إعادة وتطوير العقار مع التركيز على الجودة والابتكار لضمان راحة العملاء</text><text x="106.00" y="226.97" font-size="2.9" fill="#6d7484" textLength="41.50" lengthAdjust="spacingAndGlyphs" opacity="0.85">وتحقيق أقصى عوائد استثمارية.</text><use href="#street" x="25.60" y="234.00" width="122.00" height="76.20"/><use href="#tower" x="152.00" y="234.00" width="122.00" height="76.20"/><text x="111.30" y="321.10" font-size="6.2" fill="#1b3976" textLength="36.20" lengthAdjust="spacingAndGlyphs" font-weight="bold">التطوير العقاري</text><text x="52.00" y="327.17" font-size="2.9" fill="#6d7484" textLength="95.50" lengthAdjust="spacingAndGlyphs" opacity="0.85">إعادة وتطوير العقار مع التركيز على الجودة والابتكار لضمان راحة العملاء</text><text x="106.00" y="332.57" font-size="2.9" fill="#6d7484" textLength="41.50" lengthAdjust="spacingAndGlyphs" opacity="0.85">وتحقيق أقصى عوائد استثمارية.</text><use href="#park" x="25.60" y="339.60" width="122.00" height="76.20"/><use href="#bldg" x="152.00" y="339.60" width="122.00" height="76.20"/><text x="117.20" y="426.70" font-size="6.2" fill="#1b3976" textLength="30.30" lengthAdjust="spacingAndGlyphs" font-weight="bold">البيع والشراء</text><text x="52.00" y="432.77" font-size="2.9" fill="#6d7484" textLength="95.50" lengthAdjust="spacingAndGlyphs" opacity="0.85">إعادة وتطوير العقار مع التركيز على الجودة والابتكار لضمان راحة العملاء</text><text x="106.00" y="438.17" font-size="2.9" fill="#6d7484" textLength="41.50" lengthAdjust="spacingAndGlyphs" opacity="0.85">وتحقيق أقصى عوائد استثمارية.</text><rect x="0.00" y="518.20" width="300.00" height="108.80" fill="#0f2f6e"/><rect x="43.40" y="501.50" width="214.90" height="32.50" fill="#3d65a6" rx="2"/><rect x="53.30" y="512.20" width="45.10" height="11.20" fill="#0f2f6e" rx="0.6"/><text x="69.60" y="519.70" font-size="4.6" fill="#fff" textLength="12.40" lengthAdjust="spacingAndGlyphs" font-weight="bold">إرسال</text><rect x="102.50" y="512.20" width="91.20" height="11.20" fill="#ffffff" rx="0.6"/><text x="165.40" y="518.92" font-size="3.4" fill="#9aa1b0" textLength="22.50" lengthAdjust="spacingAndGlyphs" opacity="0.9">البريد الالكتروني</text><text x="211.40" y="515.72" font-size="3.4" fill="#ffffff" textLength="36.60" lengthAdjust="spacingAndGlyphs" opacity="0.85">اتصل بنا في افضل العروض</text><text x="224.50" y="521.80" font-size="5" fill="#fff" textLength="23.60" lengthAdjust="spacingAndGlyphs" font-weight="bold">تواصل معنا</text><circle cx="118" cy="567.4" r="1.7" fill="#fff"/><text x="91.60" y="568.70" font-size="3.8" fill="#fff" textLength="22.10" lengthAdjust="spacingAndGlyphs" opacity="0.9">0568664856</text><rect x="25.20" y="565.90" width="5.40" height="3.60" fill="#ffffff" rx="0.5"/><text x="33.80" y="569.00" font-size="4.3" fill="#fff" textLength="40.10" lengthAdjust="spacingAndGlyphs" opacity="0.9">alwafin1@gmail.com</text><circle cx="118" cy="577.8" r="1.7" fill="#fff"/><text x="91.60" y="579.10" font-size="3.8" fill="#fff" textLength="22.10" lengthAdjust="spacingAndGlyphs" opacity="0.9">0568664856</text><rect x="25.20" y="576.30" width="5.40" height="3.60" fill="#ffffff" rx="0.5"/><text x="33.80" y="579.40" font-size="4.3" fill="#fff" textLength="40.10" lengthAdjust="spacingAndGlyphs" opacity="0.9">alwafin1@gmail.com</text><path d="M158.00,565.80 H137.00" stroke="#ffffff" stroke-width="1.3" stroke-dasharray="4.6 0.9 3.1 0.8 5.0 0.8 4.1 0.7 3.3 0.7" opacity="0.8" fill="none"/></svg></div>
<svg style="left:1138px;top:146px;font-family:'Liberation Sans',sans-serif" width="420" height="20"><text x="0.00" y="13.00" font-size="13.5" fill="#c6c6c6" textLength="35.00" lengthAdjust="spacingAndGlyphs">من نحن</text><text x="324.00" y="13.00" font-size="13.5" fill="#c6c6c6" textLength="37.00" lengthAdjust="spacingAndGlyphs">الخدمات</text></svg>
<div class="a" style="left:1606.5px;top:74px;width:6px;height:711.5px;background:rgba(0,0,0,0.33);border-radius:0 0 3px 3px;border:0.7px solid rgba(255,255,255,0.45);border-top:none;"></div>
<div class="a" style="left:328px;top:1021px;width:469px;height:4.5px;background:#a9a9a9;border-radius:0 3px 3px 0;"></div>
<div class="a" style="left:0px;top:0px;width:1920px;height:48px;background:#e8e8e8;border-bottom:1px solid #c4c4c4;"></div>
<div class="a" style="left:441px;top:0px;width:113px;height:48px;background:#ffffff;"></div>
<div class="a" style="left:50px;top:0px;width:1px;height:47px;background:#c6c6c6;"></div>
<div class="a" style="left:101px;top:0px;width:1px;height:47px;background:#c6c6c6;"></div>
<div class="a" style="left:214px;top:0px;width:1px;height:47px;background:#c6c6c6;"></div>
<div class="a" style="left:327px;top:0px;width:1px;height:47px;background:#c6c6c6;"></div>
<div class="a" style="left:666px;top:0px;width:1px;height:47px;background:#c6c6c6;"></div>
<div class="a" style="left:779px;top:0px;width:1px;height:47px;background:#c6c6c6;"></div>
<div class="a" style="left:892px;top:0px;width:1px;height:47px;background:#c6c6c6;"></div>
<div class="a" style="left:1005px;top:0px;width:1px;height:47px;background:#c6c6c6;"></div>
<div class="a" style="left:1118px;top:0px;width:1px;height:47px;background:#c6c6c6;"></div>
<div class="a" style="left:1231px;top:0px;width:1px;height:47px;background:#c6c6c6;"></div>
<div class="a" style="left:1344px;top:0px;width:1px;height:47px;background:#c6c6c6;"></div>
<div class="a" style="left:1457px;top:0px;width:1px;height:47px;background:#c6c6c6;"></div>
<div class="a" style="left:1570px;top:0px;width:1px;height:47px;background:#c6c6c6;"></div>
<div class="a" style="left:1669px;top:0px;width:1px;height:47px;background:#c6c6c6;"></div>
<div class="a" style="left:809px;top:0px;width:60px;height:1.5px;background:#1a73e8;"></div>
<svg style="left:119.0px;top:16px" width="16" height="16" viewBox="0 0 16 16"><path d="M0.6,0.6 C5,1.1 10,2.1 12.2,4.3 C13.4,5.5 13.8,7 14,8.4 L15.5,11.4 L11.4,15.5 L8.4,14 C7,13.8 5.5,13.4 4.3,12.2 C2.1,10 1.1,5 0.6,0.6 Z M0.9,0.9 L6.4,6.4" fill="none" stroke="#6e6e6e" stroke-width="1.25" stroke-linejoin="round" stroke-linecap="round"/><circle cx="7.4" cy="7.4" r="1.35" fill="none" stroke="#6e6e6e" stroke-width="1.2"/></svg>
<div class="a" style="left:147.0px;top:10px;width:56px;height:28px;overflow:hidden"><span class="t" style="left:0;top:6.80px;font-size:14.4px;color:#7b7b7b;letter-spacing:0.1px">Simplorin</span><div class="a" style="right:0;top:0;width:9px;height:28px;background:linear-gradient(90deg,rgba(255,255,255,0),#e8e8e8)"></div></div>
<svg style="left:232.0px;top:16px" width="16" height="16" viewBox="0 0 16 16"><path d="M0.6,0.6 C5,1.1 10,2.1 12.2,4.3 C13.4,5.5 13.8,7 14,8.4 L15.5,11.4 L11.4,15.5 L8.4,14 C7,13.8 5.5,13.4 4.3,12.2 C2.1,10 1.1,5 0.6,0.6 Z M0.9,0.9 L6.4,6.4" fill="none" stroke="#6e6e6e" stroke-width="1.25" stroke-linejoin="round" stroke-linecap="round"/><circle cx="7.4" cy="7.4" r="1.35" fill="none" stroke="#6e6e6e" stroke-width="1.2"/></svg>
<div class="a" style="left:260.0px;top:10px;width:56px;height:28px;overflow:hidden"><span class="t" style="left:0;top:6.80px;font-size:14.4px;color:#7b7b7b;letter-spacing:0.1px">Ionicons</span><div class="a" style="right:0;top:0;width:9px;height:28px;background:linear-gradient(90deg,rgba(255,255,255,0),#e8e8e8)"></div></div>
<svg style="left:345.0px;top:16px" width="16" height="16" viewBox="0 0 16 16"><path d="M0.6,0.6 C5,1.1 10,2.1 12.2,4.3 C13.4,5.5 13.8,7 14,8.4 L15.5,11.4 L11.4,15.5 L8.4,14 C7,13.8 5.5,13.4 4.3,12.2 C2.1,10 1.1,5 0.6,0.6 Z M0.9,0.9 L6.4,6.4" fill="none" stroke="#6e6e6e" stroke-width="1.25" stroke-linejoin="round" stroke-linecap="round"/><circle cx="7.4" cy="7.4" r="1.35" fill="none" stroke="#6e6e6e" stroke-width="1.2"/></svg>
<div class="a" style="left:373.0px;top:10px;width:56px;height:28px;overflow:hidden"><span class="t" style="left:0;top:6.80px;font-size:14.4px;color:#7b7b7b;letter-spacing:0.1px">ELFAHD</span><div class="a" style="right:0;top:0;width:9px;height:28px;background:linear-gradient(90deg,rgba(255,255,255,0),#e8e8e8)"></div></div>
<svg style="left:458.0px;top:16px" width="16" height="16" viewBox="0 0 16 16"><path d="M0.6,0.6 C5,1.1 10,2.1 12.2,4.3 C13.4,5.5 13.8,7 14,8.4 L15.5,11.4 L11.4,15.5 L8.4,14 C7,13.8 5.5,13.4 4.3,12.2 C2.1,10 1.1,5 0.6,0.6 Z M0.9,0.9 L6.4,6.4" fill="none" stroke="#0d82e6" stroke-width="1.25" stroke-linejoin="round" stroke-linecap="round"/><circle cx="7.4" cy="7.4" r="1.35" fill="none" stroke="#0d82e6" stroke-width="1.2"/></svg>
<div class="a" style="left:486.0px;top:10px;width:31px;height:28px;overflow:hidden"><span class="t" style="left:0;top:6.80px;font-size:14.4px;color:#1e1e1e;letter-spacing:0.1px">Elwafin</span><div class="a" style="right:0;top:0;width:13px;height:28px;background:linear-gradient(90deg,rgba(255,255,255,0),#ffffff)"></div></div>
<svg style="left:571.0px;top:16px" width="16" height="16" viewBox="0 0 16 16"><path d="M0.6,0.6 C5,1.1 10,2.1 12.2,4.3 C13.4,5.5 13.8,7 14,8.4 L15.5,11.4 L11.4,15.5 L8.4,14 C7,13.8 5.5,13.4 4.3,12.2 C2.1,10 1.1,5 0.6,0.6 Z M0.9,0.9 L6.4,6.4" fill="none" stroke="#6e6e6e" stroke-width="1.25" stroke-linejoin="round" stroke-linecap="round"/><circle cx="7.4" cy="7.4" r="1.35" fill="none" stroke="#6e6e6e" stroke-width="1.2"/></svg>
<div class="a" style="left:599.0px;top:10px;width:56px;height:28px;overflow:hidden"><span class="t" style="left:0;top:6.80px;font-size:14.4px;color:#7b7b7b;letter-spacing:0.1px">Bosy</span><div class="a" style="right:0;top:0;width:9px;height:28px;background:linear-gradient(90deg,rgba(255,255,255,0),#e8e8e8)"></div></div>
<svg style="left:684.0px;top:16px" width="16" height="16" viewBox="0 0 16 16"><path d="M0.6,0.6 C5,1.1 10,2.1 12.2,4.3 C13.4,5.5 13.8,7 14,8.4 L15.5,11.4 L11.4,15.5 L8.4,14 C7,13.8 5.5,13.4 4.3,12.2 C2.1,10 1.1,5 0.6,0.6 Z M0.9,0.9 L6.4,6.4" fill="none" stroke="#6e6e6e" stroke-width="1.25" stroke-linejoin="round" stroke-linecap="round"/><circle cx="7.4" cy="7.4" r="1.35" fill="none" stroke="#6e6e6e" stroke-width="1.2"/></svg>
<div class="a" style="left:712.0px;top:10px;width:56px;height:28px;overflow:hidden"><span class="t" style="left:0;top:6.80px;font-size:14.4px;color:#7b7b7b;letter-spacing:0.1px">OSRTY</span><div class="a" style="right:0;top:0;width:9px;height:28px;background:linear-gradient(90deg,rgba(255,255,255,0),#e8e8e8)"></div></div>
<svg style="left:798.5px;top:16px" width="14" height="16" viewBox="0 0 14 16"><path d="M1.6,1.6 Q1.6,0.6 2.6,1.1 L12.2,7.2 Q13,8 12.2,8.8 L2.6,14.9 Q1.6,15.4 1.6,14.4 Z" fill="none" stroke="#7b7b7b" stroke-width="1.25" stroke-linejoin="round"/></svg>
<div class="a" style="left:825.0px;top:10px;width:56px;height:28px;overflow:hidden"><span class="t" style="left:0;top:6.80px;font-size:14.4px;color:#7b7b7b;letter-spacing:0.1px">OSRTY -</span><div class="a" style="right:0;top:0;width:9px;height:28px;background:linear-gradient(90deg,rgba(255,255,255,0),#e8e8e8)"></div></div>
<svg style="left:910.0px;top:16px" width="16" height="16" viewBox="0 0 16 16"><path d="M0.6,0.6 C5,1.1 10,2.1 12.2,4.3 C13.4,5.5 13.8,7 14,8.4 L15.5,11.4 L11.4,15.5 L8.4,14 C7,13.8 5.5,13.4 4.3,12.2 C2.1,10 1.1,5 0.6,0.6 Z M0.9,0.9 L6.4,6.4" fill="none" stroke="#6e6e6e" stroke-width="1.25" stroke-linejoin="round" stroke-linecap="round"/><circle cx="7.4" cy="7.4" r="1.35" fill="none" stroke="#6e6e6e" stroke-width="1.2"/></svg>
<div class="a" style="left:938.0px;top:10px;width:56px;height:28px;overflow:hidden"><span class="t" style="left:0;top:6.80px;font-size:14.4px;color:#7b7b7b;letter-spacing:0.1px">Untitled</span><div class="a" style="right:0;top:0;width:9px;height:28px;background:linear-gradient(90deg,rgba(255,255,255,0),#e8e8e8)"></div></div>
<svg style="left:1023.0px;top:16px" width="16" height="16" viewBox="0 0 16 16"><path d="M0.6,0.6 C5,1.1 10,2.1 12.2,4.3 C13.4,5.5 13.8,7 14,8.4 L15.5,11.4 L11.4,15.5 L8.4,14 C7,13.8 5.5,13.4 4.3,12.2 C2.1,10 1.1,5 0.6,0.6 Z M0.9,0.9 L6.4,6.4" fill="none" stroke="#6e6e6e" stroke-width="1.25" stroke-linejoin="round" stroke-linecap="round"/><circle cx="7.4" cy="7.4" r="1.35" fill="none" stroke="#6e6e6e" stroke-width="1.2"/></svg>
<div class="a" style="left:1051.0px;top:10px;width:56px;height:28px;overflow:hidden"><span class="t" style="left:0;top:6.80px;font-size:14.4px;color:#7b7b7b;letter-spacing:0.1px">Free_K_I</span><div class="a" style="right:0;top:0;width:9px;height:28px;background:linear-gradient(90deg,rgba(255,255,255,0),#e8e8e8)"></div></div>
<svg style="left:1136.0px;top:16px" width="16" height="16" viewBox="0 0 16 16"><path d="M0.6,0.6 C5,1.1 10,2.1 12.2,4.3 C13.4,5.5 13.8,7 14,8.4 L15.5,11.4 L11.4,15.5 L8.4,14 C7,13.8 5.5,13.4 4.3,12.2 C2.1,10 1.1,5 0.6,0.6 Z M0.9,0.9 L6.4,6.4" fill="none" stroke="#6e6e6e" stroke-width="1.25" stroke-linejoin="round" stroke-linecap="round"/><circle cx="7.4" cy="7.4" r="1.35" fill="none" stroke="#6e6e6e" stroke-width="1.2"/></svg>
<div class="a" style="left:1164.0px;top:10px;width:56px;height:28px;overflow:hidden"><span class="t" style="left:0;top:6.80px;font-size:14.4px;color:#7b7b7b;letter-spacing:0.1px">Untitled</span><div class="a" style="right:0;top:0;width:9px;height:28px;background:linear-gradient(90deg,rgba(255,255,255,0),#e8e8e8)"></div></div>
<svg style="left:1249.0px;top:16px" width="16" height="16" viewBox="0 0 16 16"><path d="M0.6,0.6 C5,1.1 10,2.1 12.2,4.3 C13.4,5.5 13.8,7 14,8.4 L15.5,11.4 L11.4,15.5 L8.4,14 C7,13.8 5.5,13.4 4.3,12.2 C2.1,10 1.1,5 0.6,0.6 Z M0.9,0.9 L6.4,6.4" fill="none" stroke="#6e6e6e" stroke-width="1.25" stroke-linejoin="round" stroke-linecap="round"/><circle cx="7.4" cy="7.4" r="1.35" fill="none" stroke="#6e6e6e" stroke-width="1.2"/></svg>
<div class="a" style="left:1277.0px;top:10px;width:56px;height:28px;overflow:hidden"><span class="t" style="left:0;top:6.80px;font-size:14.4px;color:#7b7b7b;letter-spacing:0.1px">Untitled</span><div class="a" style="right:0;top:0;width:9px;height:28px;background:linear-gradient(90deg,rgba(255,255,255,0),#e8e8e8)"></div></div>
<svg style="left:1362.0px;top:16px" width="16" height="16" viewBox="0 0 16 16"><path d="M0.6,0.6 C5,1.1 10,2.1 12.2,4.3 C13.4,5.5 13.8,7 14,8.4 L15.5,11.4 L11.4,15.5 L8.4,14 C7,13.8 5.5,13.4 4.3,12.2 C2.1,10 1.1,5 0.6,0.6 Z M0.9,0.9 L6.4,6.4" fill="none" stroke="#6e6e6e" stroke-width="1.25" stroke-linejoin="round" stroke-linecap="round"/><circle cx="7.4" cy="7.4" r="1.35" fill="none" stroke="#6e6e6e" stroke-width="1.2"/></svg>
<div class="a" style="left:1390.0px;top:10px;width:56px;height:28px;overflow:hidden"><span class="t" style="left:0;top:6.80px;font-size:14.4px;color:#7b7b7b;letter-spacing:0.1px">ELBRAA</span><div class="a" style="right:0;top:0;width:9px;height:28px;background:linear-gradient(90deg,rgba(255,255,255,0),#e8e8e8)"></div></div>
<svg style="left:1475.0px;top:16px" width="16" height="16" viewBox="0 0 16 16"><path d="M0.6,0.6 C5,1.1 10,2.1 12.2,4.3 C13.4,5.5 13.8,7 14,8.4 L15.5,11.4 L11.4,15.5 L8.4,14 C7,13.8 5.5,13.4 4.3,12.2 C2.1,10 1.1,5 0.6,0.6 Z M0.9,0.9 L6.4,6.4" fill="none" stroke="#6e6e6e" stroke-width="1.25" stroke-linejoin="round" stroke-linecap="round"/><circle cx="7.4" cy="7.4" r="1.35" fill="none" stroke="#6e6e6e" stroke-width="1.2"/></svg>
<div class="a" style="left:1503.0px;top:10px;width:56px;height:28px;overflow:hidden"><span class="t" style="left:0;top:6.80px;font-size:14.4px;color:#7b7b7b;letter-spacing:0.1px">Architec</span><div class="a" style="right:0;top:0;width:9px;height:28px;background:linear-gradient(90deg,rgba(255,255,255,0),#e8e8e8)"></div></div>
<svg style="left:522px;top:18px" width="12" height="12" viewBox="0 0 12 12"><path d="M0.7,0.7 L11.3,11.3 M11.3,0.7 L0.7,11.3" stroke="#4a4a4a" stroke-width="1.2" fill="none"/></svg>
<svg style="left:17px;top:15px" width="16" height="17" viewBox="0 0 16 17"><path d="M0.8,6.9 L8,0.9 L15.2,6.9 V15.8 H10.4 V10.6 Q10.4,9.4 9.2,9.4 H6.8 Q5.6,9.4 5.6,10.6 V15.8 H0.8 Z" fill="none" stroke="#6e6e6e" stroke-width="1.3" stroke-linejoin="round"/></svg>
<svg style="left:67px;top:15px" width="18" height="18" viewBox="0 0 18 18"><g fill="none" stroke="#6e6e6e" stroke-width="1.25"><circle cx="9" cy="9" r="8.2"/><ellipse cx="9" cy="9" rx="3.3" ry="8.2"/><path d="M0.8,9 H17.2"/></g></svg>
<svg style="left:1588px;top:17px" width="14" height="14" viewBox="0 0 14 14"><path d="M7,0 V14 M0,7 H14" stroke="#6e6e6e" stroke-width="1.3"/></svg>
<svg style="left:1695px;top:20px" width="12" height="8" viewBox="0 0 12 8"><path d="M0.5,1 L6,6.5 L11.5,1" fill="none" stroke="#6e6e6e" stroke-width="1.2"/></svg>
<div class="a" style="left:1758px;top:24.4px;width:12px;height:1.3px;background:#6e6e6e;"></div>
<svg style="left:1820px;top:18px" width="12" height="12" viewBox="0 0 12 12"><g fill="none" stroke="#6e6e6e" stroke-width="1.15"><rect x="0.6" y="2.8" width="8.6" height="8.6" rx="1"/><path d="M2.8,2.8 V1.6 Q2.8,0.6 3.8,0.6 H10.4 Q11.4,0.6 11.4,1.6 V8.2 Q11.4,9.2 10.4,9.2 H9.2"/></g></svg>
<svg style="left:1883px;top:18px" width="12" height="12" viewBox="0 0 12 12"><path d="M0.5,0.5 L11.5,11.5 M11.5,0.5 L0.5,11.5" stroke="#6e6e6e" stroke-width="1.2" fill="none"/></svg>
<div class="a" style="left:0px;top:48px;width:302px;height:982px;background:#ffffff;border-right:1px solid #e6e6e6;border-left:1px solid #dcdcdc;"></div>
<svg style="left:24px;top:68px" width="15" height="20" viewBox="0 0 15 20"><g fill="none" stroke="#1e1e1e" stroke-width="1.25"><path d="M7.2,0.7 H3.9 a3.1,3.1 0 0 0 0,6.2 H7.2 Z"/><path d="M7.2,0.7 H10.4 a3.1,3.1 0 0 1 0,6.2 H7.2 Z"/><path d="M7.2,6.9 H3.9 a3.1,3.1 0 0 0 0,6.2 H7.2 Z"/><circle cx="10.4" cy="10" r="3.1"/><path d="M7.2,13.1 H3.9 a3.1,3.1 0 1 0 3.3,3.1 Z"/></g></svg>
<svg style="left:47px;top:76px" width="8" height="5" viewBox="0 0 8 5"><path d="M0.6,0.6 L4,4 L7.4,0.6" fill="none" stroke="#1e1e1e" stroke-width="1.3"/></svg>
<svg style="left:261px;top:70px" width="21" height="16" viewBox="0 0 21 16"><g fill="none" stroke="#1e1e1e" stroke-width="1.3"><rect x="0.7" y="0.7" width="19.6" height="14.6" rx="2.2"/><path d="M6.4,0.7 V15.3"/></g></svg>
<span class="t" style="left:22.20px;top:109.10px;font-size:16.2px;color:#1e1e1e;letter-spacing:0.496px;-webkit-text-stroke:0.25px #1e1e1e;">Elwafin</span>
<svg style="left:97px;top:116px" width="8" height="5" viewBox="0 0 8 5"><path d="M0.6,0.6 L4,4 L7.4,0.6" fill="none" stroke="#1e1e1e" stroke-width="1.3"/></svg>
<span class="t" style="left:21.50px;top:139.90px;font-size:13.6px;color:#8f8f8f;letter-spacing:0.555px;">Drafts</span>
<div class="a" style="left:72px;top:136.5px;width:39px;height:19.5px;background:#f0f6ff;border-radius:5px;"></div>
<span class="t" style="left:77.00px;top:139.90px;font-size:13.6px;color:#0d6fde;letter-spacing:0.134px;">Free</span>
<div class="a" style="left:1px;top:171px;width:300px;height:1px;background:#e6e6e6;"></div>
<div class="a" style="left:11px;top:182px;width:43px;height:30px;background:#f5f5f5;border-radius:6px;"></div>
<span class="t" style="left:21.40px;top:190.50px;font-size:13.6px;color:#1e1e1e;letter-spacing:0.246px;-webkit-text-stroke:0.4px #1e1e1e;">File</span>
<span class="t" style="left:70.40px;top:190.50px;font-size:13.6px;color:#8a8a8a;letter-spacing:0.548px;">Assets</span>
<svg style="left:266px;top:187px" width="18" height="18" viewBox="0 0 18 18"><g fill="none" stroke="#1e1e1e" stroke-width="1.35"><circle cx="7.8" cy="7.8" r="6.4"/><path d="M12.5,12.5 L16.8,16.8"/></g></svg>
<div class="a" style="left:1px;top:222px;width:300px;height:1px;background:#e6e6e6;"></div>
<span class="t" style="left:21.40px;top:241.90px;font-size:13.6px;color:#1e1e1e;letter-spacing:0.327px;-webkit-text-stroke:0.2px #1e1e1e;">Pages</span>
<svg style="left:268px;top:240.5px" width="14" height="14" viewBox="0 0 14 14"><path d="M7,0 V14 M0,7 H14" stroke="#1e1e1e" stroke-width="1.25"/></svg>
<div class="a" style="left:11px;top:278px;width:280px;height:30px;background:#f5f5f5;border-radius:6px;"></div>
<span class="t" style="left:21.40px;top:286.70px;font-size:13.6px;color:#1e1e1e;letter-spacing:-0.084px;-webkit-text-stroke:0.1px #1e1e1e;">Page 1</span>
<div class="a" style="left:1px;top:321.5px;width:300px;height:1px;background:#e6e6e6;"></div>
<span class="t" style="left:21.40px;top:341.80px;font-size:13.6px;color:#1e1e1e;letter-spacing:0.463px;-webkit-text-stroke:0.2px #1e1e1e;">Layers</span>
<div class="a" style="left:302px;top:48px;width:1315px;height:26px;background:#ffffff;border-bottom:1px solid #e6e6e6;"></div>
<div class="a" style="left:302px;top:74px;width:26px;height:956px;background:#ffffff;border-right:1px solid #e6e6e6;"></div>
<div class="a" style="left:354.9px;top:68px;width:1.3px;height:5px;background:#bdbdbd;"></div>
<span class="t" style="left:338.15px;top:51.00px;font-size:13px;color:#d6d6d6;letter-spacing:0.400px;">-2500</span>
<div class="a" style="left:433.0px;top:68px;width:1.3px;height:5px;background:#bdbdbd;"></div>
<span class="t" style="left:416.27px;top:51.00px;font-size:13px;color:#b9b9b9;letter-spacing:0.400px;">-2000</span>
<div class="a" style="left:511.1px;top:68px;width:1.3px;height:5px;background:#bdbdbd;"></div>
<span class="t" style="left:494.40px;top:51.00px;font-size:13px;color:#b9b9b9;letter-spacing:0.400px;">-1500</span>
<div class="a" style="left:589.2px;top:68px;width:1.3px;height:5px;background:#bdbdbd;"></div>
<span class="t" style="left:572.52px;top:51.00px;font-size:13px;color:#b9b9b9;letter-spacing:0.400px;">-1000</span>
<div class="a" style="left:667.4px;top:68px;width:1.3px;height:5px;background:#bdbdbd;"></div>
<span class="t" style="left:654.46px;top:51.00px;font-size:13px;color:#b9b9b9;letter-spacing:0.400px;">-500</span>
<div class="a" style="left:745.5px;top:68px;width:1.3px;height:5px;background:#bdbdbd;"></div>
<span class="t" style="left:742.58px;top:51.00px;font-size:13px;color:#b9b9b9;letter-spacing:0.400px;">0</span>
<div class="a" style="left:823.6px;top:68px;width:1.3px;height:5px;background:#bdbdbd;"></div>
<span class="t" style="left:813.08px;top:51.00px;font-size:13px;color:#b9b9b9;letter-spacing:0.400px;">500</span>
<div class="a" style="left:901.8px;top:68px;width:1.3px;height:5px;background:#bdbdbd;"></div>
<span class="t" style="left:887.39px;top:51.00px;font-size:13px;color:#b9b9b9;letter-spacing:0.400px;">1000</span>
<div class="a" style="left:979.9px;top:68px;width:1.3px;height:5px;background:#bdbdbd;"></div>
<span class="t" style="left:965.51px;top:51.00px;font-size:13px;color:#b9b9b9;letter-spacing:0.400px;">1500</span>
<div class="a" style="left:1058.0px;top:68px;width:1.3px;height:5px;background:#bdbdbd;"></div>
<span class="t" style="left:1043.64px;top:51.00px;font-size:13px;color:#b9b9b9;letter-spacing:0.400px;">2000</span>
<div class="a" style="left:1136.1px;top:68px;width:1.3px;height:5px;background:#bdbdbd;"></div>
<span class="t" style="left:1121.76px;top:51.00px;font-size:13px;color:#b9b9b9;letter-spacing:0.400px;">2500</span>
<div class="a" style="left:1214.2px;top:68px;width:1.3px;height:5px;background:#bdbdbd;"></div>
<span class="t" style="left:1199.89px;top:51.00px;font-size:13px;color:#b9b9b9;letter-spacing:0.400px;">3000</span>
<div class="a" style="left:1292.4px;top:68px;width:1.3px;height:5px;background:#bdbdbd;"></div>
<span class="t" style="left:1278.01px;top:51.00px;font-size:13px;color:#b9b9b9;letter-spacing:0.400px;">3500</span>
<div class="a" style="left:1370.5px;top:68px;width:1.3px;height:5px;background:#bdbdbd;"></div>
<span class="t" style="left:1356.14px;top:51.00px;font-size:13px;color:#b9b9b9;letter-spacing:0.400px;">4000</span>
<div class="a" style="left:1448.6px;top:68px;width:1.3px;height:5px;background:#bdbdbd;"></div>
<span class="t" style="left:1434.26px;top:51.00px;font-size:13px;color:#b9b9b9;letter-spacing:0.400px;">4500</span>
<div class="a" style="left:1526.8px;top:68px;width:1.3px;height:5px;background:#bdbdbd;"></div>
<span class="t" style="left:1512.39px;top:51.00px;font-size:13px;color:#b9b9b9;letter-spacing:0.400px;">5000</span>
<div class="a" style="left:1604.9px;top:68px;width:1.3px;height:5px;background:#bdbdbd;"></div>
<div class="a" style="left:1590.5px;top:48px;width:26.5px;height:20px;overflow:hidden"><span class="t" style="left:0;top:3.00px;font-size:13px;color:#b9b9b9;letter-spacing:0.4px">5500</span></div>
<div class="a" style="left:322px;top:155.2px;width:5px;height:1.3px;background:#bdbdbd;"></div>
<span class="t" style="left:307.2px;top:148.8px;width:7.6px;font-size:13px;color:#b9b9b9;letter-spacing:0.4px;transform:rotate(-90deg);transform-origin:50% 50%;text-align:center">0</span>
<div class="a" style="left:322px;top:233.3px;width:5px;height:1.3px;background:#bdbdbd;"></div>
<span class="t" style="left:299.6px;top:226.9px;width:22.9px;font-size:13px;color:#b9b9b9;letter-spacing:0.4px;transform:rotate(-90deg);transform-origin:50% 50%;text-align:center">500</span>
<div class="a" style="left:322px;top:311.5px;width:5px;height:1.3px;background:#bdbdbd;"></div>
<span class="t" style="left:295.7px;top:305.1px;width:30.5px;font-size:13px;color:#b9b9b9;letter-spacing:0.4px;transform:rotate(-90deg);transform-origin:50% 50%;text-align:center">1000</span>
<div class="a" style="left:322px;top:389.6px;width:5px;height:1.3px;background:#bdbdbd;"></div>
<span class="t" style="left:295.7px;top:383.2px;width:30.5px;font-size:13px;color:#b9b9b9;letter-spacing:0.4px;transform:rotate(-90deg);transform-origin:50% 50%;text-align:center">1500</span>
<div class="a" style="left:322px;top:467.7px;width:5px;height:1.3px;background:#bdbdbd;"></div>
<span class="t" style="left:295.7px;top:461.3px;width:30.5px;font-size:13px;color:#b9b9b9;letter-spacing:0.4px;transform:rotate(-90deg);transform-origin:50% 50%;text-align:center">2000</span>
<div class="a" style="left:322px;top:545.8px;width:5px;height:1.3px;background:#bdbdbd;"></div>
<span class="t" style="left:295.7px;top:539.4px;width:30.5px;font-size:13px;color:#b9b9b9;letter-spacing:0.4px;transform:rotate(-90deg);transform-origin:50% 50%;text-align:center">2500</span>
<div class="a" style="left:322px;top:624.0px;width:5px;height:1.3px;background:#bdbdbd;"></div>
<span class="t" style="left:295.7px;top:617.6px;width:30.5px;font-size:13px;color:#b9b9b9;letter-spacing:0.4px;transform:rotate(-90deg);transform-origin:50% 50%;text-align:center">3000</span>
<div class="a" style="left:322px;top:702.1px;width:5px;height:1.3px;background:#bdbdbd;"></div>
<span class="t" style="left:295.7px;top:695.7px;width:30.5px;font-size:13px;color:#b9b9b9;letter-spacing:0.4px;transform:rotate(-90deg);transform-origin:50% 50%;text-align:center">3500</span>
<div class="a" style="left:322px;top:780.2px;width:5px;height:1.3px;background:#bdbdbd;"></div>
<span class="t" style="left:295.7px;top:773.8px;width:30.5px;font-size:13px;color:#b9b9b9;letter-spacing:0.4px;transform:rotate(-90deg);transform-origin:50% 50%;text-align:center">4000</span>
<div class="a" style="left:322px;top:858.3px;width:5px;height:1.3px;background:#bdbdbd;"></div>
<span class="t" style="left:295.7px;top:851.9px;width:30.5px;font-size:13px;color:#b9b9b9;letter-spacing:0.4px;transform:rotate(-90deg);transform-origin:50% 50%;text-align:center">4500</span>
<div class="a" style="left:322px;top:936.5px;width:5px;height:1.3px;background:#bdbdbd;"></div>
<span class="t" style="left:295.7px;top:930.1px;width:30.5px;font-size:13px;color:#b9b9b9;letter-spacing:0.4px;transform:rotate(-90deg);transform-origin:50% 50%;text-align:center">5000</span>
<div class="a" style="left:322px;top:1014.6px;width:5px;height:1.3px;background:#bdbdbd;"></div>
<span class="t" style="left:295.7px;top:1008.2px;width:30.5px;font-size:13px;color:#b9b9b9;letter-spacing:0.4px;transform:rotate(-90deg);transform-origin:50% 50%;text-align:center">5500</span>
<div class="a" style="left:302px;top:48px;width:26px;height:26px;background:#ffffff;border-bottom:1px solid #e6e6e6;border-right:1px solid #e6e6e6;"></div>
<div class="a" style="left:1617px;top:48px;width:303px;height:982px;background:#ffffff;border-left:1px solid #3f3a3a;"></div>
<div class="a" style="left:1634px;top:63px;width:30px;height:30px;border-radius:50%;background:#9747ff"></div>
<span class="t" style="left:1643.60px;top:70.35px;font-size:15.5px;color:#ffffff;font-weight:bold;">H</span>
<svg style="left:1670.5px;top:75px" width="9" height="6" viewBox="0 0 9 6"><path d="M0.7,0.8 L4.5,4.6 L8.3,0.8" fill="none" stroke="#1e1e1e" stroke-width="1.4"/></svg>
<svg style="left:1789px;top:68.5px" width="17" height="19" viewBox="0 0 17 19"><path d="M1.8,2.4 Q1.8,0.6 3.4,1.5 L14.6,8.2 Q15.9,9.5 14.6,10.8 L3.4,17.5 Q1.8,18.4 1.8,16.6 Z" fill="none" stroke="#1e1e1e" stroke-width="1.4" stroke-linejoin="round"/></svg>
<svg style="left:1822.7px;top:76px" width="8" height="5" viewBox="0 0 8 5"><path d="M0.6,0.6 L4,4 L7.4,0.6" fill="none" stroke="#1e1e1e" stroke-width="1.3"/></svg>
<div class="a" style="left:1842px;top:58px;width:68px;height:40px;background:#0d99ff;border-radius:6px;"></div>
<span class="t" style="left:1857.00px;top:71.60px;font-size:13.8px;color:#ffffff;letter-spacing:-0.071px;font-weight:bold;">Share</span>
<div class="a" style="left:1629px;top:108px;width:66px;height:30px;background:#f5f5f5;border-radius:6px;"></div>
<span class="t" style="left:1639.00px;top:116.70px;font-size:13.6px;color:#1e1e1e;letter-spacing:0.611px;-webkit-text-stroke:0.4px #1e1e1e;">Design</span>
<span class="t" style="left:1711.00px;top:116.70px;font-size:13.6px;color:#8a8a8a;letter-spacing:0.699px;">Prototype</span>
<span class="t" style="left:1845.70px;top:116.70px;font-size:13.6px;color:#1e1e1e;letter-spacing:0.027px;">13%</span>
<svg style="left:1891.8px;top:121px" width="8" height="5" viewBox="0 0 8 5"><path d="M0.6,0.6 L4,4 L7.4,0.6" fill="none" stroke="#1e1e1e" stroke-width="1.3"/></svg>
<div class="a" style="left:1618px;top:148px;width:302px;height:1px;background:#e6e6e6;"></div>
<span class="t" style="left:1639.00px;top:167.70px;font-size:13.6px;color:#1e1e1e;letter-spacing:0.259px;-webkit-text-stroke:0.2px #1e1e1e;">Page</span>
<div class="a" style="left:1639px;top:204px;width:231px;height:30px;background:#f5f5f5;border-radius:6px;"></div>
<div class="a" style="left:1802px;top:204px;width:1px;height:30px;background:#ffffff;"></div>
<div class="a" style="left:1645px;top:211px;width:17px;height:17px;background:#f5f5f5;border:1px solid #d4d4d4;border-radius:3.5px;"></div>
<span class="t" style="left:1669.70px;top:212.70px;font-size:13.6px;color:#1e1e1e;letter-spacing:0.364px;">F5F5F5</span>
<span class="t" style="left:1813.00px;top:212.70px;font-size:13.6px;color:#1e1e1e;letter-spacing:0.103px;">100</span>
<span class="t" style="left:1851.40px;top:212.70px;font-size:13.6px;color:#8a8a8a;">%</span>
<svg style="left:1886px;top:212.5px" width="18" height="13" viewBox="0 0 18 13"><g fill="none" stroke="#1e1e1e" stroke-width="1.35"><path d="M0.8,6.5 C3,2.4 6,0.8 9,0.8 C12,0.8 15,2.4 17.2,6.5 C15,10.6 12,12.2 9,12.2 C6,12.2 3,10.6 0.8,6.5 Z"/><circle cx="9" cy="6.5" r="1.9"/></g></svg>
<div class="a" style="left:1618px;top:254px;width:302px;height:1px;background:#e6e6e6;"></div>
<span class="t" style="left:1639.00px;top:273.40px;font-size:13.6px;color:#7d7d7d;letter-spacing:0.499px;">Local variables</span>
<svg style="left:1887px;top:271px" width="16" height="18" viewBox="0 0 16 18"><g fill="none" stroke="#6a6a6a" stroke-width="1.2"><path d="M3.2,0.5 V9.4 M3.2,14 V17.5 M12.2,0.5 V3.4 M12.2,8 V17.5"/><circle cx="3.2" cy="11.7" r="2.3"/><circle cx="12.2" cy="5.7" r="2.3"/></g></svg>
<div class="a" style="left:1618px;top:305px;width:302px;height:1px;background:#e6e6e6;"></div>
<span class="t" style="left:1639.00px;top:324.60px;font-size:13.6px;color:#7d7d7d;letter-spacing:0.570px;">Local styles</span>
<svg style="left:1888px;top:323.5px" width="14" height="14" viewBox="0 0 14 14"><path d="M7,0 V14 M0,7 H14" stroke="#6a6a6a" stroke-width="1.2"/></svg>
<div class="a" style="left:1618px;top:356px;width:302px;height:1px;background:#e6e6e6;"></div>
<span class="t" style="left:1639.00px;top:375.60px;font-size:13.6px;color:#7d7d7d;letter-spacing:0.665px;">Export</span>
<svg style="left:1888px;top:374.5px" width="14" height="14" viewBox="0 0 14 14"><path d="M7,0 V14 M0,7 H14" stroke="#6a6a6a" stroke-width="1.2"/></svg>
<div class="a" style="left:1618px;top:407px;width:302px;height:1px;background:#e6e6e6;"></div>
<div class="a" style="left:1849px;top:960px;width:40px;height:40px;border-radius:50%;background:#1e1e1e;box-shadow:0 2px 6px rgba(0,0,0,.25)"></div>
<span class="t" style="left:1863.00px;top:969.25px;font-size:22.5px;color:#ffffff;">?</span>
<div class="a" style="left:697px;top:955px;width:526px;height:59.5px;border-radius:15px;background:#ffffff;box-shadow:0 2px 6px rgba(0,0,0,.13),0 0 1px rgba(0,0,0,.25)"></div>
<div class="a" style="left:707px;top:965px;width:40px;height:40px;background:#0d99ff;border-radius:6px;"></div>
<svg style="left:716px;top:974px" width="24" height="24" viewBox="0 0 24 24"><path d="M2.2,2.6 Q1.6,1 3.2,1.6 L21,8.2 Q22.6,9 21,9.9 L13.2,13 L10,21 Q9.2,22.6 8.4,21 Z" fill="none" stroke="#ffffff" stroke-width="1.5" stroke-linejoin="round"/></svg>
<svg style="left:753.4px;top:983.2px" width="8" height="5" viewBox="0 0 8 5"><path d="M0.6,0.6 L4,4 L7.4,0.6" fill="none" stroke="#1e1e1e" stroke-width="1.3"/></svg>
<svg style="left:788px;top:975px" width="20" height="20" viewBox="0 0 20 20"><path d="M4.4,0 V20 M15.6,0 V20 M0,4.5 H20 M0,15.6 H20" stroke="#1e1e1e" stroke-width="1.4" fill="none"/></svg>
<svg style="left:824.3px;top:983.2px" width="8" height="5" viewBox="0 0 8 5"><path d="M0.6,0.6 L4,4 L7.4,0.6" fill="none" stroke="#1e1e1e" stroke-width="1.3"/></svg>
<svg style="left:859px;top:975.4px" width="20" height="20" viewBox="0 0 20 20"><rect x="0.8" y="0.8" width="18.4" height="18.4" rx="2.6" fill="none" stroke="#1e1e1e" stroke-width="1.4"/></svg>
<svg style="left:896.3px;top:983.2px" width="8" height="5" viewBox="0 0 8 5"><path d="M0.6,0.6 L4,4 L7.4,0.6" fill="none" stroke="#1e1e1e" stroke-width="1.3"/></svg>
<svg style="left:931.4px;top:975.8px" width="20.4" height="20.4" viewBox="0 0 16 16"><path d="M0.6,0.6 C5,1.1 10,2.1 12.2,4.3 C13.4,5.5 13.8,7 14,8.4 L15.5,11.4 L11.4,15.5 L8.4,14 C7,13.8 5.5,13.4 4.3,12.2 C2.1,10 1.1,5 0.6,0.6 Z M0.9,0.9 L6.4,6.4" fill="none" stroke="#1e1e1e" stroke-width="1.1" stroke-linejoin="round" stroke-linecap="round"/><circle cx="7.4" cy="7.4" r="1.35" fill="none" stroke="#1e1e1e" stroke-width="1.05"/></svg>
<svg style="left:967.5px;top:983.2px" width="8" height="5" viewBox="0 0 8 5"><path d="M0.6,0.6 L4,4 L7.4,0.6" fill="none" stroke="#1e1e1e" stroke-width="1.3"/></svg>
<svg style="left:1001.7px;top:976.4px" width="19.4" height="18.2" viewBox="0 0 19.4 18.2"><path d="M0.7,4 V0.7 H18.7 V4 M9.7,0.7 V17.5 M6,17.5 H13.4" stroke="#1e1e1e" stroke-width="1.4" fill="none"/></svg>
<svg style="left:1051.6px;top:975.2px" width="21" height="21" viewBox="0 0 21 21"><path d="M10.5,0.8 A9.7,9.7 0 1 1 10.5,20.2 H1.6 Q0.8,20.2 0.8,19.4 V10.5 A9.7,9.7 0 0 1 10.5,0.8 Z" fill="none" stroke="#1e1e1e" stroke-width="1.4"/></svg>
<svg style="left:1101.5px;top:974.6px" width="22" height="22" viewBox="0 0 22 22"><g fill="none" stroke="#1e1e1e" stroke-width="1.35"><path d="M5,0.9 L9.1,5 L5,9.1 L0.9,5 Z"/><circle cx="16.5" cy="5" r="3.6"/><rect x="1.4" y="13.3" width="7.2" height="7.2" rx="1.3"/><path d="M16.5,12.8 V21 M12.4,16.9 H20.6"/></g></svg>
<div class="a" style="left:1142.5px;top:955px;width:1px;height:59.5px;background:#e6e6e6;"></div>
<div class="a" style="left:1158.5px;top:970px;width:49.5px;height:30px;background:#f3f3f3;border-radius:8px;"></div>
<div class="a" style="left:1158.5px;top:970px;width:28.5px;height:30px;border-radius:8px;background:#fff;box-shadow:0 0 2px rgba(0,0,0,.3)"></div>
<svg style="left:1162.6px;top:978.5px" width="21" height="13" viewBox="0 0 21 13"><path d="M5.4,1.4 L0.9,6.5 L5.4,11.6 M15.6,1.4 L20.1,6.5 L15.6,11.6 M12.6,0.6 L8.4,12.4" fill="none" stroke="#1e1e1e" stroke-width="1.3" stroke-linejoin="round"/></svg>
<div class="a" style="left:0px;top:1030px;width:1920px;height:50px;background:linear-gradient(90deg,#d6e5ee 0%,#d4e3eb 55%,#d9e4ea 100%);"></div>
<div class="a" style="left:0px;top:48px;width:1px;height:982px;background:#dcdcdc;"></div>
<div class="a" style="left:1919px;top:48px;width:1px;height:982px;background:#dedede;"></div>
<div class="a" style="left:682px;top:1030px;width:61px;height:50px;background:rgba(255,255,255,0.55);"></div>
<div class="a" style="left:315px;top:1077.3px;width:51px;height:2.7px;background:#0078d4;"></div>
<div class="a" style="left:625px;top:1077.3px;width:51px;height:2.7px;background:#0078d4;"></div>
<div class="a" style="left:682px;top:1077.3px;width:61px;height:2.7px;background:#0078d4;"></div>
<div class="a" style="left:811px;top:1077.3px;width:51px;height:2.7px;background:#0078d4;"></div>
<svg style="left:20px;top:1045px" width="20" height="20" viewBox="0 0 20 20"><path d="M0,2.8 L8.2,1.7 V9.5 H0 Z M9.2,1.55 L20,0 V9.5 H9.2 Z M0,10.5 H8.2 V18.3 L0,17.2 Z M9.2,10.5 H20 V20 L9.2,18.45 Z" fill="#000"/></svg>
<svg style="left:80px;top:1044.5px" width="20" height="20" viewBox="0 0 20 20"><g fill="none" stroke="#000" stroke-width="1.2"><rect x="0.6" y="5" width="12.3" height="10"/><path d="M0.6,0.5 V2.4 H12.9 V0.5 M0.6,19.5 V17.6 H12.9 V19.5 M18.6,0.5 V6 M18.6,9 V19.5"/></g><rect x="17.2" y="6.2" width="2.8" height="2.8" fill="#000"/></svg>
<svg style="left:139px;top:1040px" width="31" height="31" viewBox="0 0 31 31"><defs><linearGradient id="ed1" x1="0" y1="0" x2="1" y2="1"><stop offset="0" stop-color="#35c1f1"/><stop offset="1" stop-color="#2bc48a"/></linearGradient><linearGradient id="ed2" x1="0" y1="0" x2="1" y2="1"><stop offset="0" stop-color="#1b6fd0"/><stop offset="1" stop-color="#114a9a"/></linearGradient></defs><path d="M15.5,0.6 A14.9,14.9 0 0 1 30.4,14.5 Q30.4,21.5 23,21.5 H17.5 Q20,19 19.5,16 Q18.6,11.5 13.5,11.2 Q6,11.2 1,17 Q0,7 8,2.5 Q11.5,0.6 15.5,0.6 Z" fill="url(#ed1)"/><path d="M1,17 Q4.5,11.2 13.5,11.2 Q9,13 9,18.5 Q9.5,26.5 19,29.4 Q9.5,32 3.6,24.5 Q1.2,21 1,17 Z" fill="url(#ed2)"/><path d="M19,29.4 Q11,27.5 9.6,21 Q14,25.5 20,24.6 Q25,23.8 27.5,21.4 Q25.6,27.4 19,29.4 Z" fill="#1859b3"/><circle cx="7.6" cy="23.6" r="6.4" fill="#6ccbf5"/><circle cx="7.6" cy="23.6" r="5" fill="#c98d5a"/><circle cx="7.6" cy="23.6" r="3.9" fill="#ec6bd3"/><circle cx="7.6" cy="23.6" r="1.6" fill="#c98d5a"/></svg>
<svg style="left:201px;top:1040px" width="30" height="30" viewBox="0 0 30 30"><circle cx="15" cy="15" r="15" fill="#dd4b39"/><path d="M15,15 L2.01,7.5 A15,15 0 0 0 15,30 L21.5,18.75 Z" fill="#2da94f"/><path d="M15,15 L27.99,7.5 A15,15 0 0 1 15,30 L21.5,18.75 Z" fill="#fbbc09"/><path d="M15,15 L2.01,7.5 A15,15 0 0 1 27.99,7.5 Z" fill="#e8432f"/><circle cx="15" cy="15" r="6.9" fill="#ffffff"/><circle cx="15" cy="15" r="5.4" fill="#3f84e9"/></svg>
<svg style="left:266px;top:1040px" width="23" height="30" viewBox="0 0 23 30"><rect width="23" height="30" rx="2" fill="#6b7d8f"/><rect x="2.8" y="3" width="17.4" height="5" fill="#49bff2"/><rect x="2.8" y="10.6" width="4.8" height="4.8" fill="#d9dee3"/><rect x="9.0" y="10.6" width="4.8" height="4.8" fill="#d9dee3"/><rect x="15.2" y="10.6" width="4.8" height="4.8" fill="#d9dee3"/><rect x="2.8" y="16.8" width="4.8" height="4.8" fill="#d9dee3"/><rect x="9.0" y="16.8" width="4.8" height="4.8" fill="#d9dee3"/><rect x="2.8" y="23.0" width="4.8" height="4.8" fill="#d9dee3"/><rect x="9.0" y="23.0" width="4.8" height="4.8" fill="#d9dee3"/><rect x="15.2" y="16.8" width="5" height="11" fill="#17468c"/></svg>
<svg style="left:325.6px;top:1042.6px" width="29" height="24" viewBox="0 0 29 24"><path d="M0,1 Q0,0 1,0 H11 L13,2.6 H28 Q29,2.6 29,3.6 V23 Q29,24 28,24 H1 Q0,24 0,23 Z" fill="#f7c04c"/><path d="M0,1 Q0,0 1,0 H11 L13,2.6 H0 Z" fill="#e8a33a"/><path d="M0,6 H29 V23 Q29,24 28,24 H1 Q0,24 0,23 Z" fill="#fbd46d"/><path d="M5,24 V14.5 Q5,12.5 7,12.5 H22 Q24,12.5 24,14.5 V24 H19.4 V17.4 H9.6 V24 Z" fill="#3b86dc"/><path d="M5,16 V14.5 Q5,12.5 7,12.5 H22 Q24,12.5 24,14.5 V16 Z" fill="#5ea2ea"/></svg>
<div class="a" style="left:387px;top:1040px;width:30px;height:30px;background:#797676;"></div>
<div class="a" style="left:392px;top:1045px;width:9.4px;height:9.4px;background:#ea4535;"></div>
<div class="a" style="left:402.6px;top:1045px;width:9.4px;height:9.4px;background:#7eba18;"></div>
<div class="a" style="left:392px;top:1055.6px;width:9.4px;height:9.4px;background:#10a1ec;"></div>
<div class="a" style="left:402.6px;top:1055.6px;width:9.4px;height:9.4px;background:#fbbd3c;"></div>
<svg style="left:449px;top:1039px" width="31" height="31" viewBox="0 0 31 31"><g fill="#2d97ea"><circle cx="15.5" cy="16" r="12.2"/><rect x="13.2" y="0.8" width="4.6" height="6" rx="1" transform="rotate(0 15.5 16)"/><rect x="13.2" y="0.8" width="4.6" height="6" rx="1" transform="rotate(45 15.5 16)"/><rect x="13.2" y="0.8" width="4.6" height="6" rx="1" transform="rotate(90 15.5 16)"/><rect x="13.2" y="0.8" width="4.6" height="6" rx="1" transform="rotate(135 15.5 16)"/><rect x="13.2" y="0.8" width="4.6" height="6" rx="1" transform="rotate(180 15.5 16)"/><rect x="13.2" y="0.8" width="4.6" height="6" rx="1" transform="rotate(225 15.5 16)"/><rect x="13.2" y="0.8" width="4.6" height="6" rx="1" transform="rotate(270 15.5 16)"/><rect x="13.2" y="0.8" width="4.6" height="6" rx="1" transform="rotate(315 15.5 16)"/></g><ellipse cx="15.5" cy="15" rx="10" ry="8.2" fill="#fafafa"/><circle cx="6.2" cy="9.2" r="3.3" fill="#16181c"/><circle cx="24.8" cy="9.2" r="3.3" fill="#16181c"/><path d="M1.6,14 Q0.6,9.4 4,9 Q6,12 5.4,17 Z" fill="#16181c"/><ellipse cx="11" cy="15.4" rx="2.7" ry="2.2" fill="#16181c"/><ellipse cx="20" cy="15.4" rx="2.7" ry="2.2" fill="#16181c"/><ellipse cx="15.5" cy="18" rx="1.2" ry="0.8" fill="#16181c"/><path d="M13.6,20 Q15.5,22 17.4,20" stroke="#d8663a" stroke-width="1.2" fill="none"/></svg>
<svg style="left:511px;top:1040px" width="30" height="30" viewBox="0 0 30 30"><rect width="30" height="30" rx="2.6" fill="#1f1f1f"/><path d="M11.3,4.2 H15 V11.4 H11.3 A3.6,3.6 0 0 1 11.3,4.2 Z" fill="#f24e1e"/><path d="M15,4.2 H18.7 A3.6,3.6 0 0 1 18.7,11.4 H15 Z" fill="#ff7262"/><path d="M11.3,11.4 H15 V18.6 H11.3 A3.6,3.6 0 0 1 11.3,11.4 Z" fill="#a259ff"/><circle cx="18.7" cy="15" r="3.6" fill="#1abcfe"/><path d="M11.3,18.6 H15 V22.2 A3.65,3.65 0 1 1 11.3,18.6 Z" fill="#0acf83"/></svg>
<svg style="left:697px;top:1040px" width="30" height="30" viewBox="0 0 30 30"><rect width="30" height="30" rx="2.6" fill="#1f1f1f"/><path d="M11.3,4.2 H15 V11.4 H11.3 A3.6,3.6 0 0 1 11.3,4.2 Z" fill="#f24e1e"/><path d="M15,4.2 H18.7 A3.6,3.6 0 0 1 18.7,11.4 H15 Z" fill="#ff7262"/><path d="M11.3,11.4 H15 V18.6 H11.3 A3.6,3.6 0 0 1 11.3,11.4 Z" fill="#a259ff"/><circle cx="18.7" cy="15" r="3.6" fill="#1abcfe"/><path d="M11.3,18.6 H15 V22.2 A3.65,3.65 0 1 1 11.3,18.6 Z" fill="#0acf83"/></svg>
<div class="a" style="left:574px;top:1040.6px;width:27.4px;height:26.4px;background:#0b1c30;border:1.3px solid #35a8fa;"></div>
<span class="t" style="left:579.20px;top:1046.35px;font-size:16.5px;color:#38b0ff;letter-spacing:-0.878px;">Ps</span>
<div class="a" style="left:635px;top:1040px;width:30px;height:30px;background:#470137;border-radius:5.5px;"></div>
<span class="t" style="left:639.50px;top:1046.65px;font-size:17.5px;color:#ff61f6;letter-spacing:-0.432px;font-weight:bold;">Xd</span>
<svg style="left:760px;top:1040px" width="29" height="29" viewBox="0 0 29 29"><path d="M2.4,8 L4.4,5.2 L7,7.2 Q8.6,6.2 10.2,5.8 L10.6,2.4 H13.2 L13.6,0.8 H15.4 L15.8,2.4 H18.4 L18.8,5.8 Q20.4,6.2 22,7.2 L24.6,5.2 L26.6,8 L25,10.4 Q26.6,13 26.6,16 V23 Q26.6,26.6 20,27.6 H9 Q2.4,26.6 2.4,23 V16 Q2.4,13 4,10.4 Z" fill="#478cbf"/><path d="M2.4,19 H6.4 V22 H10 V19.6 H12.6 V22 H16.4 V19.6 H19 V22 H22.6 V19 H26.6 V23 Q26.6,26.6 20,27.6 H9 Q2.4,26.6 2.4,23 Z" fill="#3a76a8"/><path d="M2.4,18.4 H6.9 V21.4 H9.5 V19 H13.1 V21.4 H15.9 V19 H19.5 V21.4 H22.1 V18.4 H26.6" stroke="#e7eef5" stroke-width="1" fill="none"/><circle cx="8.8" cy="14.4" r="3" fill="#f3f6f9"/><circle cx="20.2" cy="14.4" r="3" fill="#f3f6f9"/><circle cx="9" cy="14.6" r="1.7" fill="#3b4650"/><circle cx="20" cy="14.6" r="1.7" fill="#3b4650"/><rect x="13.6" y="12.6" width="1.8" height="4.6" rx="0.9" fill="#e7eef5"/></svg>
<svg style="left:821.3px;top:1040px" width="30" height="30" viewBox="0 0 30 30"><circle cx="15" cy="15" r="15" fill="#dd4b39"/><path d="M15,15 L2.01,7.5 A15,15 0 0 0 15,30 L21.5,18.75 Z" fill="#2da94f"/><path d="M15,15 L27.99,7.5 A15,15 0 0 1 15,30 L21.5,18.75 Z" fill="#fbbc09"/><path d="M15,15 L2.01,7.5 A15,15 0 0 1 27.99,7.5 Z" fill="#e8432f"/><circle cx="15" cy="15" r="6.9" fill="#ffffff"/><circle cx="15" cy="15" r="5.4" fill="#3f84e9"/></svg>
<div class="a" style="left:833.5px;top:1052.3px;width:19px;height:19px;border-radius:50%;background:#46566c"></div>
<span class="t" style="left:838.80px;top:1056.40px;font-size:12px;color:#e8ecf1;font-weight:bold;">H</span>
<svg style="left:1394px;top:1039px" width="33" height="32" viewBox="0 0 33 32"><path d="M2,13 Q8,14 10.6,8 Q11.6,5 11.2,2.4 Q14.4,6 13,11.4 Q11,16.4 5.6,16 Q3,15.4 2,13 Z" fill="#e5c9a0"/><path d="M7.4,29.6 Q1.4,29.6 1.4,24.4 Q1.4,19.6 6.6,19.2 Q7.6,12.6 14.6,12.6 Q20.6,12.6 22.2,18 Q30.6,17.4 30.8,24 Q30.8,29.6 25,29.6 Z" fill="#c7d6ef" opacity="0.95"/><circle cx="23.7" cy="8.6" r="7.6" fill="#cf9e81"/></svg>
<span class="t" style="left:1414.80px;top:1042.10px;font-size:12.4px;color:#ffffff;font-weight:bold;">1</span>
<span class="t" style="left:1436.30px;top:1047.20px;font-size:17.6px;color:#959ca3;letter-spacing:-0.882px;">15°C</span>
<svg style="left:1484px;top:1040px;font-family:'Liberation Sans',sans-serif" width="70" height="32"><text x="0.00" y="21.50" font-size="17" fill="#959ca3" textLength="66.20" lengthAdjust="spacingAndGlyphs">غائم غالبًا</text></svg>
<svg style="left:1581.4px;top:1050.4px" width="17" height="10" viewBox="0 0 17 10"><path d="M0.7,9.2 L8.5,1.2 L16.3,9.2" fill="none" stroke="#000" stroke-width="1.5"/></svg>
<svg style="left:1612px;top:1047.6px" width="17" height="16" viewBox="0 0 17 16"><g fill="none" stroke="#000" stroke-width="1.35"><path d="M0.8,15.2 A14.4,14.4 0 0 1 15.2,0.8"/><path d="M5,15.2 A10.2,10.2 0 0 1 15.2,5"/><path d="M9.2,15.2 A6,6 0 0 1 15.2,9.2"/></g><circle cx="14.4" cy="14.4" r="1.5" fill="#000"/></svg>
<svg style="left:1643px;top:1046px" width="17" height="19" viewBox="0 0 17 19"><g fill="none" stroke="#000" stroke-width="1.25"><rect x="0.7" y="4.4" width="10.6" height="10" rx="2.2"/><path d="M11.3,8 L16.2,5.4 V13.4 L11.3,10.8"/><path d="M3.4,2.4 Q6,0 8.6,2.4 M3.4,16.6 Q6,19 8.6,16.6"/></g></svg>
<svg style="left:1669.6px;top:1047px" width="21" height="16" viewBox="0 0 21 16"><g fill="none" stroke="#000" stroke-width="1.2"><rect x="2.6" y="4" width="17.6" height="9.6"/><path d="M2.6,6.8 H0.7 V10.8 H2.6"/><path d="M3.4,0.6 V3 M5.8,0.6 V3 M2.2,3 H7 V4"/></g><rect x="4.4" y="5.8" width="5" height="6" fill="#000"/></svg>
<svg style="left:1700px;top:1046.5px" width="21" height="17" viewBox="0 0 21 17"><g fill="none" stroke="#000" stroke-width="1.25" stroke-linejoin="round"><path d="M0.7,5.8 H4 L8.4,1.4 V15.6 L4,11.2 H0.7 Z"/><path d="M11,5.6 Q12.8,8.5 11,11.4 M13.8,3.4 Q17,8.5 13.8,13.6 M16.6,1.2 Q21.2,8.5 16.6,15.8"/></g></svg>
<span class="t" style="left:1733.50px;top:1048.45px;font-size:14.5px;color:#000;letter-spacing:-1.141px;">ENG</span>
<span class="t" style="left:1782.50px;top:1036.55px;font-size:14.5px;color:#000;letter-spacing:-0.446px;">10:27 PM</span>
<span class="t" style="left:1779.00px;top:1059.55px;font-size:14.5px;color:#000;letter-spacing:0.221px;">1/25/2025</span>
<svg style="left:1869px;top:1045.6px" width="22" height="21" viewBox="0 0 22 21"><path d="M0.5,0.5 H21.5 V15.2 H6.4 L0.5,20.5 Z" fill="#000"/><path d="M4,4.6 H18 M4,7.8 H18 M4,11 H13" stroke="#d7e4ec" stroke-width="1.2"/></svg>
<div class="a" style="left:1878.5px;top:1055.5px;width:19px;height:19px;border-radius:50%;background:#d8e2e8;border:1.3px solid #2b2b2b"></div>
<span class="t" style="left:1884.10px;top:1058.95px;font-size:13.5px;color:#000;">2</span>
<svg style="left:840px;top:945px" width="240" height="120" viewBox="840 945 240 120"><g opacity="0.23" fill="none" stroke="#7c7c7c" stroke-linecap="round" stroke-linejoin="round"><path d="M884,960 V992 Q884,1012.5 866,1012.5 Q851.5,1012.5 851.5,998 V990" stroke-width="11.5"/><path d="M884,1008 H1040" stroke-width="11"/><circle cx="921.5" cy="992" r="15.5" stroke-width="11"/><path d="M962,1006 V992 M986,1006 V994 M1003,1006 V994 M1020,1006 V994" stroke-width="11"/><ellipse cx="1054" cy="1003" rx="14.5" ry="10.6" stroke-width="10.5"/><g stroke="none" fill="#7c7c7c"><circle cx="913.3" cy="960" r="7.3"/><circle cx="929.6" cy="960" r="7.3"/><circle cx="954.5" cy="973" r="7"/><circle cx="970.4" cy="973" r="7"/></g></g></svg>
<span class="t" style="left:845.50px;top:1019.65px;font-size:35.5px;color:rgba(124,124,124,0.19);letter-spacing:0.912px;font-weight:bold;">mostaql.com</span>
</body></html>
